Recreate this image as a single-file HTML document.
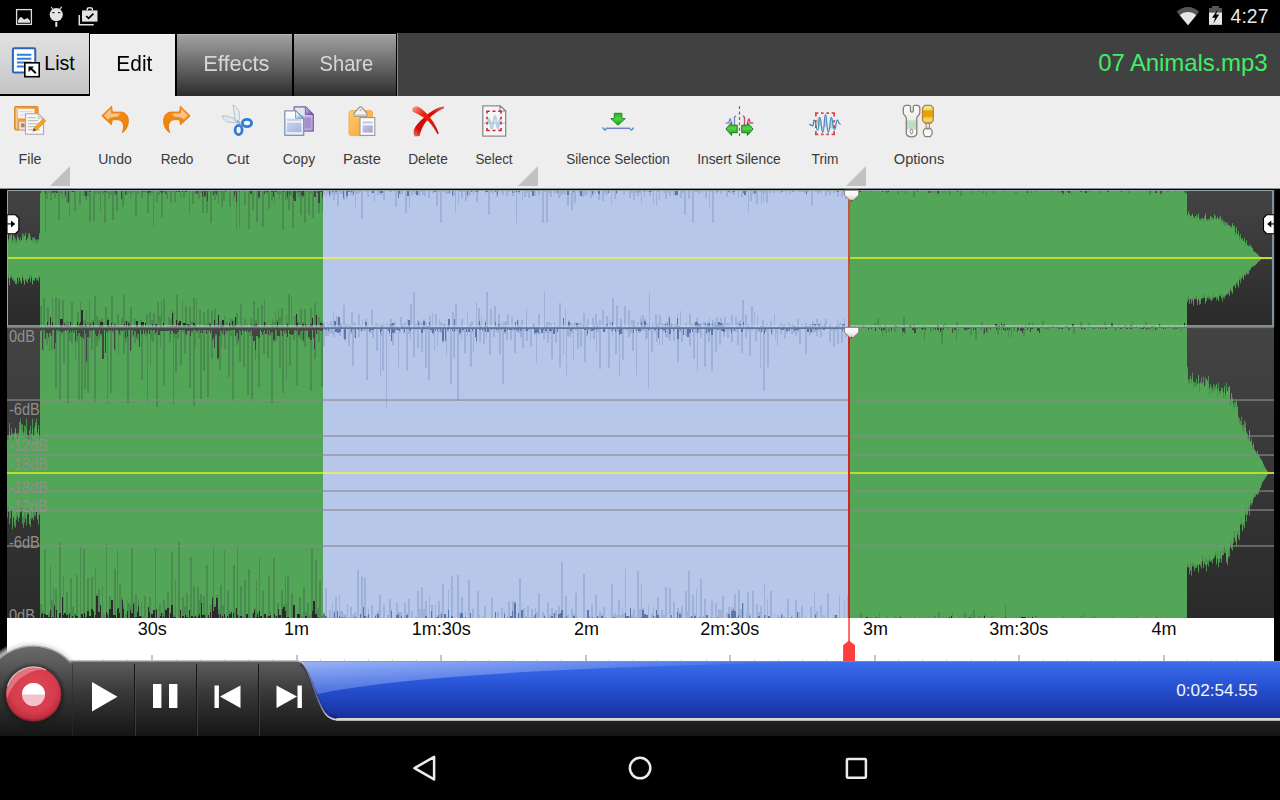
<!DOCTYPE html>
<html lang="en">
<head>
<meta charset="utf-8">
<title>07 Animals.mp3</title>
<style>
*{box-sizing:border-box;margin:0;padding:0}
html,body{width:1280px;height:800px;overflow:hidden;background:#000;font-family:"Liberation Sans",sans-serif;}
#app{position:relative;width:1280px;height:800px;background:#000;overflow:hidden}
.abs{position:absolute}
/* status bar */
#status{position:absolute;left:0;top:0;width:1280px;height:33px;background:#000;color:#fff}
#clock{position:absolute;right:11.500px;top:6px;font-size:19.300px;line-height:22px;color:#e8e8e8;letter-spacing:0.1px}
/* tab bar */
#tabbar{position:absolute;left:0;top:33px;width:1280px;height:63px;background:#414141}
#tabblack{position:absolute;left:0;top:0;width:397px;height:63px;background:#000}
.tab{position:absolute;top:1px;height:62px;font-size:21.300px;line-height:61.200px;padding-left:3px;text-align:center;color:#d6d6d6;background:linear-gradient(#a3a3a3 0%,#6e6e6e 45%,#2c2c2c 100%)}
#t-list{left:0;top:0;width:89px;height:61px;padding-left:0;background:linear-gradient(#e0e0e0,#dadada 30%,#c4c4c4);color:#000}
#t-edit{left:90px;width:85px;height:64px;background:#eeeeee;color:#000;box-shadow:inset 1px 1px 0 #fafafa}
#t-eff{left:177px;width:115px;box-shadow:inset 0 1px 0 #b4b4b4}
#t-share{left:294px;width:102px;box-shadow:inset 0 1px 0 #b4b4b4}
#fname{position:absolute;right:12.500px;top:0;height:63px;line-height:60px;font-size:24px;letter-spacing:-0.100px;color:#40ee68}
/* toolbar */
#toolbar{position:absolute;left:0;top:96px;width:1280px;height:93px;background:#eeeeee}
.tb{position:absolute;top:0;height:93px;font-size:15.5px;color:#3a3a3a;text-align:center;white-space:nowrap}
.tb span{position:absolute;left:50%;transform:translateX(-50%);top:51px;line-height:24px}
.tb svg{position:absolute;left:50%;top:8px;margin-left:-17px}
.tri{position:absolute;top:70px;width:0;height:0;border-left:20px solid transparent;border-bottom:20px solid #c1c1c1}
/* timeline */
#timeline{position:absolute;left:7px;top:618px;width:1267px;height:43px;background:#fff}
.tl{position:absolute;top:1px;font-size:18px;line-height:20px;color:#0a0a0a;transform:translateX(-50%);white-space:nowrap;letter-spacing:0}
/* nav */
#nav{position:absolute;left:0;top:736px;width:1280px;height:64px;background:#000}
.tab b{display:inline-block;font-weight:normal}
</style>
</head>
<body>
<div id="app">
<div id="status">
<svg class="abs" style="left:0;top:0" width="120" height="33" viewBox="0 0 120 33">
 <rect x="16.600" y="9.600" width="14.800" height="14.800" fill="none" stroke="#dcdcdc" stroke-width="1.300"/>
 <path d="M18 22.800V20.500C19.500 18 20.200 17 21.100 17C22.300 17 23 19.500 24.200 19.500C25.200 19.500 26 18.300 27.200 18.300C28.400 18.300 29.200 20 30 21V22.800Z" fill="#e2e2e2"/>
 <ellipse cx="56.250" cy="14.600" rx="6.600" ry="6.600" fill="#e4e4e4"/>
 <rect x="55.300" y="22" width="2" height="4.800" fill="#e4e4e4"/>
 <path d="M53 9.400L51.100 7M59.500 9.400L61.800 7" stroke="#e4e4e4" stroke-width="1.100"/>
 <path d="M52.300 12.700h2.200M58 12.700h2.200" stroke="#222" stroke-width="1.200"/>
 <path d="M79.300 15V24.700H93.700" fill="none" stroke="#e2e2e2" stroke-width="1.500"/>
 <path d="M82 10.400H97.500V21.600H82Z" fill="#e4e4e4"/>
 <path d="M87.300 10.400V8.800C87.300 7.400 92.300 7.400 92.300 8.800V10.400" fill="none" stroke="#e4e4e4" stroke-width="1.400"/>
 <path d="M86.200 16L88.600 18.400L93.400 13.600" fill="none" stroke="#000" stroke-width="1.700"/>
</svg>
<svg class="abs" style="left:1170px;top:0" width="60" height="33" viewBox="1170 0 60 33">
 <path d="M1176.700 11.800C1183 5.400 1193 5.400 1199.200 11.800L1188 25.200Z" fill="#565656"/>
 <path d="M1179.800 15.200C1184.300 10.900 1191.700 10.900 1196.200 15.200L1188 25.200Z" fill="#e6e6e6"/>
 <path d="M1209 8H1212V6.100H1219V8H1222V24.800H1209Z" fill="#565656"/>
 <path d="M1209 12.600H1222V24.800H1209Z" fill="#e6e6e6"/>
 <path d="M1217.800 9.300L1212 17.800H1215.200L1213.200 23.800L1219.200 14.600H1216.100Z" fill="#000"/>
</svg>
<div id="clock">4:27</div>
</div>
<div id="tabbar">
 <div id="tabblack"></div>
 <div class="abs" style="left:397px;top:0;width:1px;height:63px;background:#8a8a8a"></div>
 <div class="tab" id="t-list"><span style="position:absolute;left:44.300px;top:0;font-size:19.600px;line-height:61.400px;letter-spacing:0px">List</span>
  <svg class="abs" style="left:10px;top:12px" width="34" height="34" viewBox="0 0 34 34">
   <rect x="2.900" y="3.250" width="22.350" height="24.250" rx="1.200" fill="#fff" stroke="#2d63b6" stroke-width="2"/>
   <path d="M6.900 9.750H21.300M6.900 13.750H21.300M6.900 17.600H21.300M6.900 21.600H16" stroke="#2f7fe0" stroke-width="2"/>
   <rect x="14.800" y="17.800" width="14.400" height="13.900" fill="#fff" stroke="#000" stroke-width="1.600"/>
   <path d="M18.5 21.5 H24 L22.2 23.3 L26.5 27.6 L25.1 29 L20.8 24.7 L18.5 27 Z" fill="#000"/>
  </svg>
 </div>
 <div class="tab" id="t-edit"><b style="transform:scaleX(.98)">Edit</b></div>
 <div class="tab" id="t-eff"><b style="transform:scaleX(1.025)">Effects</b></div>
 <div class="tab" id="t-share"><b style="transform:scaleX(.945)">Share</b></div>
 <div id="fname">07 Animals.mp3</div>
</div>
<div id="toolbar">
<svg width="0" height="0" style="position:absolute"><defs>
 <linearGradient id="gOr" x1="0" y1="0" x2="1" y2="1"><stop offset="0" stop-color="#f6a64a"/><stop offset="1" stop-color="#ee8d1c"/></linearGradient>
 <linearGradient id="gArr" x1="0" y1="0" x2="0" y2="1"><stop offset="0" stop-color="#f59a2c"/><stop offset="0.35" stop-color="#ee8a14"/><stop offset="1" stop-color="#ea8208"/></linearGradient>
 <linearGradient id="gPurp" x1="0" y1="0" x2="1" y2="1"><stop offset="0" stop-color="#e6dcf0"/><stop offset="1" stop-color="#b29cd6"/></linearGradient>
 <linearGradient id="gDoc" x1="0" y1="0" x2="0" y2="1"><stop offset="0" stop-color="#ffffff"/><stop offset="1" stop-color="#dde9f8"/></linearGradient>
 <linearGradient id="gBand" x1="0" y1="0" x2="1" y2="1"><stop offset="0" stop-color="#cfd2e8"/><stop offset="1" stop-color="#9fb8e0"/></linearGradient>
 <linearGradient id="gClip" x1="0" y1="0" x2="1" y2="1"><stop offset="0" stop-color="#fece6c"/><stop offset="1" stop-color="#f99e36"/></linearGradient>
 <linearGradient id="gPBand" x1="0" y1="0" x2="1" y2="1"><stop offset="0" stop-color="#c2c2f0"/><stop offset="1" stop-color="#a5a5c2"/></linearGradient>
 <linearGradient id="gGrn" x1="0" y1="0" x2="0" y2="1"><stop offset="0" stop-color="#2cae28"/><stop offset="0.45" stop-color="#52d24c"/><stop offset="1" stop-color="#1f9a1c"/></linearGradient>
 <linearGradient id="gRed1" x1="0" y1="0" x2="1" y2="1"><stop offset="0" stop-color="#f8a090"/><stop offset="0.35" stop-color="#e8200c"/><stop offset="1" stop-color="#d01008"/></linearGradient>
 <linearGradient id="gRed2" x1="1" y1="0" x2="0" y2="1"><stop offset="0" stop-color="#e06060"/><stop offset="0.3" stop-color="#d40a06"/><stop offset="0.8" stop-color="#d60c08"/><stop offset="1" stop-color="#f07868"/></linearGradient>
 <linearGradient id="gWave" x1="0" y1="0" x2="1" y2="0"><stop offset="0" stop-color="#5866bc"/><stop offset="0.3" stop-color="#2f9ab4"/><stop offset="0.5" stop-color="#5b7cc4"/><stop offset="0.7" stop-color="#2f9ab4"/><stop offset="1" stop-color="#5866bc"/></linearGradient>
 <linearGradient id="gHandle" x1="0" y1="0" x2="0" y2="1"><stop offset="0" stop-color="#f07878"/><stop offset="0.07" stop-color="#f4e8b0"/><stop offset="0.2" stop-color="#e2e66a"/><stop offset="0.34" stop-color="#e6a000"/><stop offset="0.6" stop-color="#e8a204"/><stop offset="0.72" stop-color="#eed050"/><stop offset="0.86" stop-color="#e4e070"/><stop offset="1" stop-color="#e89838"/></linearGradient>
 <linearGradient id="gWr" x1="0" y1="0" x2="0" y2="1"><stop offset="0" stop-color="#fffbee"/><stop offset="0.3" stop-color="#f2f2f0"/><stop offset="0.44" stop-color="#efefef"/><stop offset="0.5" stop-color="#bfdfc4"/><stop offset="0.74" stop-color="#bfdfc4"/><stop offset="0.8" stop-color="#fffbee"/><stop offset="1" stop-color="#f4f4ea"/></linearGradient>
 <linearGradient id="gFlapB" x1="0" y1="0" x2="1" y2="1"><stop offset="0" stop-color="#ffffff"/><stop offset="0.45" stop-color="#bfe6f8"/><stop offset="1" stop-color="#3ea6e4"/></linearGradient>
 <linearGradient id="gFlapP" x1="0" y1="0" x2="1" y2="1"><stop offset="0" stop-color="#d8cdf0"/><stop offset="0.5" stop-color="#9a8ad8"/><stop offset="1" stop-color="#5444b8"/></linearGradient>
</defs></svg>
 <div class="tb" style="left:0;width:60px"><svg width="34" height="34" viewBox="0 0 34 34">
  <rect x="1.6" y="2.6" width="23.4" height="23.4" rx="1.4" fill="url(#gOr)" stroke="#d98a30" stroke-width="1.1"/>
  <rect x="2.8" y="3.8" width="1.6" height="21" fill="#fbd29c" opacity="0.8"/>
  <rect x="4.8" y="4.8" width="16.6" height="9.6" fill="#f5f4fb"/>
  <path d="M6.5 7.6h13M6.5 10.8h13" stroke="#ddd8ee" stroke-width="1.2"/>
  <rect x="6" y="17.6" width="14" height="8.2" fill="#e4e1f0" stroke="#b4b0d0" stroke-width=".7"/>
  <rect x="8.4" y="19.8" width="2.8" height="3.2" fill="#c47f22" stroke="#8f7a9a" stroke-width=".5"/>
  <path d="M12.5 9.7h12.8l5.2 5v15.6h-18z" fill="#f6f6f5" stroke="#a6a6a6" stroke-width="1.1" stroke-linejoin="round"/>
  <path d="M25.3 9.7v5h5.2z" fill="#e0e0e0" stroke="#b0b0b0" stroke-width=".6"/>
  <path d="M15 13.6h8M15 16.6h10M15 19.6h9M15 22.6h7M15 25.6h12" stroke="#c4c4c2" stroke-width="1.3"/>
  <path d="M30.4 14.6l2.4 2.4-9.6 9.4-2.4-2.4z" fill="#f6a61c" stroke="#e07c10" stroke-width=".7"/>
  <path d="M20.8 24l2.4 2.4-3.6 1.2z" fill="#7a4a20"/>
 </svg><span style="transform:translateX(-50%) scaleX(0.917)">File</span></div>
 <div class="tri" style="left:50px"></div>
 <div class="tb" style="left:85px;width:60px"><svg width="34" height="34" viewBox="0 0 34 34">
  <path d="M3.9 11.8L13.6 2.2L14.3 8.1L23.4 8.1C28 8.6 30.9 13 30.3 18.4C29.8 23 27.2 27 24.3 28.6C25.6 25 26 22 25 19.6C24 17 21.6 15.6 19 15.6L14.3 15.8L13.4 20.7Z" fill="url(#gArr)" stroke="#ee7a10" stroke-width="1" stroke-linejoin="round"/>
  <path d="M6 11.6L12.6 5.2L13.2 9.4L22 9.6L20 12.6L12.8 13.6L10 15.4Z" fill="#f7cf9c" opacity="0.85"/>
 </svg><span style="transform:translateX(-50%) scaleX(0.906)">Undo</span></div>
 <div class="tb" style="left:147px;width:60px"><svg width="34" height="34" viewBox="0 0 34 34"><g transform="translate(34,0) scale(-1,1)">
  <path d="M3.9 11.8L13.6 2.2L14.3 8.1L23.4 8.1C28 8.6 30.9 13 30.3 18.4C29.8 23 27.2 27 24.3 28.6C25.6 25 26 22 25 19.6C24 17 21.6 15.6 19 15.6L14.3 15.8L13.4 20.7Z" fill="url(#gArr)" stroke="#ee7a10" stroke-width="1" stroke-linejoin="round"/>
  <path d="M6 11.6L12.6 5.2L13.2 9.4L22 9.6L20 12.6L12.8 13.6L10 15.4Z" fill="#f7cf9c" opacity="0.85"/>
 </g></svg><span style="transform:translateX(-50%) scaleX(0.882)">Redo</span></div>
 <div class="tb" style="left:208px;width:60px"><svg width="34" height="34" viewBox="0 0 34 34">
  <path d="M1.2 11.8C3 11.4 8 12.6 12.6 14.2L17.6 18.4L16.4 19C12 18.6 7.5 18.4 5.6 17.6C3.2 16.4 1.4 13.6 1.2 11.8Z" fill="#dde8f2" stroke="#aeb6be" stroke-width=".8"/>
  <path d="M11.8 1.2C14.6 2 17.6 5.4 18.2 8.8C18.6 12 18.2 15.4 17.6 18.4L14.6 17.6C13.4 13.4 13.6 6 11.8 1.2Z" fill="#e4eef8" stroke="#aab2ba" stroke-width=".8"/>
  <path d="M16 16.5l3.5 3.5" stroke="#9aa2aa" stroke-width="1.6"/>
  <ellipse cx="26" cy="19" rx="4.6" ry="3.6" fill="#f2f2f2" stroke="#2f7cd4" stroke-width="2.8"/>
  <ellipse cx="17.6" cy="26" rx="3.5" ry="4.6" fill="#f2f2f2" stroke="#2f7cd4" stroke-width="2.8"/>
 </svg><span style="transform:translateX(-50%) scaleX(0.946)">Cut</span></div>
 <div class="tb" style="left:269px;width:60px"><svg width="34" height="34" viewBox="0 0 34 34">
  <path d="M12.2 2.8h11.2l7.9 7.6v16.7h-19.1z" fill="url(#gPurp)" stroke="#7e64aa" stroke-width="1.3" stroke-linejoin="round"/>
  <path d="M13.4 4h9.2v7.4h-9.2z" fill="#e8e6ea"/>
  <path d="M23.4 2.800v7.600h7.900z" fill="url(#gFlapP)" stroke="#7256a6" stroke-width=".8" stroke-linejoin="round"/>
  <rect x="22.5" y="13.4" width="6.6" height="10.8" fill="#a78fd0"/>
  <path d="M2.800 6.800h10.800l8.100 7.600v17h-18.900z" fill="url(#gDoc)" stroke="#8094b6" stroke-width="1.3" stroke-linejoin="round"/>
  <path d="M13.600 6.800v7.600h8.100z" fill="url(#gFlapB)" stroke="#6a86ae" stroke-width=".8" stroke-linejoin="round"/>
  <rect x="5" y="14.700" width="14.400" height="2.200" fill="#c8cfe8"/>
  <rect x="5" y="18.600" width="14.400" height="9.400" fill="url(#gBand)"/>
 </svg><span style="transform:translateX(-50%) scaleX(0.893)">Copy</span></div>
 <div class="tb" style="left:332px;width:60px"><svg width="34" height="34" viewBox="0 0 34 34">
  <rect x="4" y="6.6" width="23.6" height="25" rx="2.4" fill="url(#gClip)" stroke="#f2a040" stroke-width=".8"/>
  <path d="M15.500 2.800c.8 0 1.200.4 1.700 1.100L21 8.400q.8.300.8 1.100v2.700h-12.600v-2.700q0-.8.800-1.100L13.800 3.900c.5-.7.900-1.100 1.700-1.100z" fill="#f4f4f3" stroke="#938c84" stroke-width="1.100"/>
  <path d="M9.2 10.400h12.600v1.800h-12.600z" fill="#c9c7c2"/>
  <circle cx="15.500" cy="6.200" r="1.100" fill="#b9b9b9"/>
  <rect x="15" y="13.600" width="14.800" height="17.800" fill="#fafaff" stroke="#9a9898" stroke-width="1.100"/>
  <rect x="17.600" y="17.400" width="10.200" height="2.200" fill="#c9c8ea"/>
  <rect x="17.600" y="21.300" width="10.200" height="7.300" fill="url(#gPBand)"/>
 </svg><span style="transform:translateX(-50%) scaleX(0.954)">Paste</span></div>
 <div class="tb" style="left:398px;width:60px"><svg width="34" height="34" viewBox="0 0 34 34">
  <path d="M33 2.2L32.800 4.600C28 6.500 23.500 9.500 20 12.600C16.500 16 13.600 19.500 12 22.500C10.200 26 9 29.500 8.600 32L3.600 32.600C2.600 30.500 2.400 28 2.800 26C4.500 21.500 8 17.800 12 14.400C15 11.500 18.500 8.500 22 6.500C25.500 4.500 29.500 2.800 33 2.200Z" fill="url(#gRed2)"/>
  <path d="M2 3.600C3.500 2.400 5.500 2.200 7 2.500C11 4.500 14.500 8 17 11C19 13.400 20.600 15.500 22 17.500C24.500 21.500 26.500 25.500 27.800 29.500L26.600 30.300C24.500 26.500 22 22.500 19 19C17 16.600 14.500 14.500 12 13C8.500 10.800 4.500 9 1.500 7.500C1.200 6 1.400 4.500 2 3.600Z" fill="url(#gRed1)"/>
 </svg><span style="transform:translateX(-50%) scaleX(0.884)">Delete</span></div>
 <div class="tb" style="left:464px;width:60px"><svg width="34" height="34" viewBox="0 0 34 34">
  <path d="M5.800 1.800h17.200l5.700 5.200v25.200h-22.900z" fill="#f6f6f6" stroke="#8a8a90" stroke-width="1.300" stroke-linejoin="round"/>
  <path d="M23 1.800v5.200h5.700z" fill="#fdfdfd" stroke="#8a8a90" stroke-width="1.100" stroke-linejoin="round"/>
  <path d="M6.500 19h21.500" stroke="#c8c8ea" stroke-width="1.400"/>
  <path d="M10.800 19C11.200 19 11.200 14.800 12 14.800C13.300 14.800 13.300 24.400 14.600 24.400C16.200 24.400 16.400 12.200 18 12.200C19.600 12.200 19.600 24.400 20.900 24.400C22.200 24.400 22.200 14.800 23 14.800C23.800 14.800 23.800 19 24.200 19" fill="none" stroke="#79b6ca" stroke-width="1.700" opacity="0.8"/><path d="M10.800 19C11.200 19 11.200 14.800 12 14.800C13.300 14.800 13.300 24.400 14.600 24.400C16.200 24.400 16.400 12.200 18 12.200C19.600 12.200 19.600 24.400 20.900 24.400C22.200 24.400 22.200 14.800 23 14.800C23.800 14.800 23.800 19 24.200 19" fill="none" stroke="#d4e8f2" stroke-width="0.600"/>
  <path d="M9.250 7.300h3.500M15.500 7.300h3M21.250 7.300h3.500M9.250 26.500h3.500M15.500 26.500h3M21.250 26.500h3.500M10 6.500v3M10 12.750v2.500M10 18v2.500M10 24v3.250M24 6.500v3M24 12.750v2.500M24 18v2.500M24 24v3.250" fill="none" stroke="#d3222c" stroke-width="1.600"/>
 </svg><span style="transform:translateX(-50%) scaleX(0.863)">Select</span></div>
 <div class="tri" style="left:518px"></div>
 <div class="tb" style="left:558px;width:120px"><svg width="34" height="34" viewBox="0 0 34 34">
  <path d="M13.300 9.300h7.600v5.300h3.300L17 21.200L9.800 14.600h3.500z" fill="url(#gGrn)" stroke="#1a8c16" stroke-width="1" stroke-linejoin="round"/>
  <path d="M5.300 24.300h23.600" stroke="#767fc8" stroke-width="1.500"/>
  <path d="M1.300 23.800C3 23.800 3 26 4.300 26C5 26 5.200 24.300 5.500 24.300M28.800 24.300C29 24.300 29.300 26 30.200 26C31.400 26 31.400 24 32.800 24" fill="none" stroke="#4f8cc8" stroke-width="1.400"/>
 </svg><span style="transform:translateX(-50%) scaleX(0.870)">Silence Selection</span></div>
 <div class="tb" style="left:689px;width:100px"><svg width="34" height="34" viewBox="0 0 34 34">
  <path d="M17.500 2.200V32" stroke="#666" stroke-width="1.200" stroke-dasharray="2.900 2.500"/>
  <path d="M3.800 19h2.800c.7 0 .7-4.200 1.500-4.200c.9 0 .7 4.200 1.600 4.200M12.500 21V13.200l1.500-1.300" fill="none" stroke="#7c86cc" stroke-width="1.400"/>
  <path d="M31.200 19h-2.800c-.7 0-.7-4.200-1.500-4.200c-.9 0-.7 4.200-1.600 4.200M22.500 21V13.200l-1.500-1.300" fill="none" stroke="#d04a6c" stroke-width="1.400"/>
  <path d="M3.900 25L9.600 18.600V21.200h5.600v7.500H9.600v2.700z" fill="url(#gGrn)" stroke="#157a12" stroke-width="1" stroke-linejoin="round"/>
  <path d="M31.100 25L25.400 18.600V21.200h-5.600v7.500h5.600v2.700z" fill="url(#gGrn)" stroke="#157a12" stroke-width="1" stroke-linejoin="round"/>
 </svg><span style="transform:translateX(-50%) scaleX(0.890)">Insert Silence</span></div>
 <div class="tb" style="left:795px;width:60px"><svg width="34" height="34" viewBox="0 0 34 34">
  <path d="M8.500 21C8.500 13 10 13.300 11.500 13.300C13.300 13.300 12.800 28.300 14.800 28.300C16.600 28.300 16 10.600 17.500 10.600C19 10.600 18.500 28.300 20.300 28.300C22.200 28.300 21.600 13.300 23.300 13.300C25 13.300 25 21 26 25Z" fill="#b4c6e4" opacity="0.9"/>
  <path d="M1.300 20.300C3 20.300 3.600 21.800 4.600 21.800C5.800 21.800 5 16.200 6.300 16.200C8 16.200 7.600 26 9.800 26C11.300 26 10.400 13.300 11.800 13.300C13.400 13.300 13 28.400 14.800 28.400C16.500 28.400 16 10.600 17.500 10.600C19 10.600 18.600 28.400 20.300 28.400C22 28.400 21.800 13.300 23.300 13.300C24.800 13.300 24.600 25.600 26.400 25.600C28.200 25.600 27.800 16.200 29.300 16.200C30.700 16.200 30.200 20.500 32.800 20.500" fill="none" stroke="url(#gWave)" stroke-width="1.200"/>
  <path d="M7 9.100h3.300M13 9.100h2.600M18.400 9.100h2.600M23.700 9.100h3.300M7 30.400h3.300M13 30.400h2.600M18.400 30.400h2.600M23.700 30.400h3.300M7.850 8.250v4.300M7.850 16v2.600M7.850 21.200v2.800M7.850 27v4.200M26.150 8.250v4.300M26.150 16v2.600M26.150 21.200v2.800M26.150 27v4.200" fill="none" stroke="#d83a3a" stroke-width="1.700" opacity="0.920"/>
 </svg><span style="transform:translateX(-50%) scaleX(0.883)">Trim</span></div>
 <div class="tri" style="left:846px"></div>
 <div class="tb" style="left:889px;width:60px"><svg width="34" height="34" viewBox="0 0 34 34">
  <path d="M4 1.400H7c1 0 1.500.6 1.500 1.600V7c0 1.400 2.800 1.400 2.800 0V3c0-1 .5-1.600 1.500-1.600H15.300c1.400 0 2.500 1.500 2.500 3V9c0 2.500-3 3-3 5V29c0 2.300-2.300 3.800-5.200 3.800C6.600 32.800 4.300 31.300 4.300 29V14c0-2-3-2.500-3-5V4.400C1.300 2.900 2.500 1.400 4 1.400Z" fill="url(#gWr)" stroke="#818181" stroke-width="1.300" stroke-linejoin="round"/>
  <path d="M9.500 24.800l1.600 2.700-1.600 2.700-1.600-2.700z" fill="#fafaf2" stroke="#8a8a8a" stroke-width="1"/>
  <path d="M22.700 1.400h6.400l2.200 2.600v12.400l-2.500 2.900h-5.800l-2.500-2.900V4z" fill="url(#gHandle)" stroke="#c47a3a" stroke-width="1.200" stroke-linejoin="round"/>
  <rect x="24.200" y="19.400" width="3.200" height="5" fill="#e8efe6" stroke="#8a8a8a" stroke-width="1"/>
  <path d="M23.400 24.400h4.700l2 2.300v3l-1.700 3h-5.300l-1.700-3v-3z" fill="#fbf9ee" stroke="#818181" stroke-width="1.200" stroke-linejoin="round"/>
  <path d="M24.300 24.900h3l1 1.400h-5z" fill="#bfe0c4"/>
 </svg><span style="transform:translateX(-50%) scaleX(0.944)">Options</span></div>
</div>
<svg class="abs" style="left:0;top:188px" width="1280" height="432" viewBox="0 188 1280 432">
<defs><linearGradient id="bgT" gradientUnits="userSpaceOnUse" x1="0" y1="190" x2="0" y2="327"><stop offset="0" stop-color="#444444"/><stop offset="1" stop-color="#2a2a2a"/></linearGradient><linearGradient id="bgB" gradientUnits="userSpaceOnUse" x1="0" y1="328" x2="0" y2="618"><stop offset="0" stop-color="#444444"/><stop offset="1" stop-color="#2a2a2a"/></linearGradient></defs>
<rect x="0" y="188" width="1280" height="432" fill="#000"/><rect x="0" y="188" width="1280" height="0.600" fill="#eeeeee"/>
<rect x="7" y="190" width="1267" height="137" fill="url(#bgT)"/>
<rect x="7" y="328" width="1267" height="291" fill="url(#bgB)"/>
<rect x="323" y="190" width="526" height="429" fill="#b7c7e9"/>
<rect x="40" y="190" width="283" height="137" fill="#53a558"/>
<rect x="40" y="328" width="283" height="291" fill="#53a558"/>
<path fill="#4a8b4f" d="M40 190h1v3h-1zM43 190h2v2h-2zM45 190h1v42h-1zM46 190h2v9h-2zM48 190h2v3h-2zM50 190h2v10h-2zM54 190h2v8h-2zM58 190h2v30h-2zM60 190h2v4h-2zM62 190h1v9h-1zM63 190h1v1h-1zM64 190h2v7h-2zM66 190h2v13h-2zM69 190h1v26h-1zM70 190h2v2h-2zM74 190h2v21h-2zM76 190h1v2h-1zM79 190h2v15h-2zM83 190h2v6h-2zM85 190h2v10h-2zM87 190h2v6h-2zM89 190h2v32h-2zM93 190h2v31h-2zM95 190h1v4h-1zM96 190h2v3h-2zM98 190h2v4h-2zM100 190h1v22h-1zM101 190h1v2h-1zM102 190h2v4h-2zM104 190h2v33h-2zM106 190h2v3h-2zM108 190h2v9h-2zM110 190h2v5h-2zM112 190h2v30h-2zM114 190h2v5h-2zM116 190h2v21h-2zM118 190h2v1h-2zM122 190h2v17h-2zM126 190h2v5h-2zM128 190h2v3h-2zM130 190h1v8h-1zM131 190h2v4h-2zM133 190h2v2h-2zM135 190h2v25h-2zM137 190h2v4h-2zM141 190h2v8h-2zM143 190h2v3h-2zM147 190h2v23h-2zM149 190h2v5h-2zM151 190h2v3h-2zM153 190h1v37h-1zM156 190h2v12h-2zM158 190h2v5h-2zM161 190h2v27h-2zM165 190h1v4h-1zM166 190h2v9h-2zM168 190h2v2h-2zM170 190h2v13h-2zM172 190h2v2h-2zM174 190h2v12h-2zM180 190h1v8h-1zM183 190h2v8h-2zM185 190h2v2h-2zM189 190h1v24h-1zM192 190h2v14h-2zM194 190h2v4h-2zM196 190h2v5h-2zM198 190h2v9h-2zM200 190h2v3h-2zM202 190h2v23h-2zM204 190h2v8h-2zM206 190h2v23h-2zM208 190h2v2h-2zM210 190h2v33h-2zM212 190h2v5h-2zM214 190h2v10h-2zM216 190h2v6h-2zM218 190h1v14h-1zM219 190h2v2h-2zM221 190h2v17h-2zM223 190h2v11h-2zM229 190h2v17h-2zM233 190h1v11h-1zM234 190h2v7h-2zM236 190h1v40h-1zM239 190h1v38h-1zM242 190h2v1h-2zM244 190h2v15h-2zM248 190h2v39h-2zM252 190h2v20h-2zM256 190h2v32h-2zM258 190h2v9h-2zM260 190h2v2h-2zM262 190h2v37h-2zM266 190h2v4h-2zM268 190h2v19h-2zM271 190h2v11h-2zM273 190h1v7h-1zM274 190h1v15h-1zM277 190h2v4h-2zM279 190h1v9h-1zM280 190h2v4h-2zM282 190h2v40h-2zM284 190h1v2h-1zM285 190h2v10h-2zM287 190h1v9h-1zM288 190h2v20h-2zM290 190h2v6h-2zM292 190h2v38h-2zM296 190h2v3h-2zM298 190h2v7h-2zM300 190h2v25h-2zM302 190h2v8h-2zM304 190h2v33h-2zM306 190h2v2h-2zM308 190h2v25h-2zM310 190h2v3h-2zM312 190h2v28h-2zM318 190h2v23h-2zM322 190h1v21h-1z"/>
<path fill="url(#bgT)" d="M40 190h1v3h-1zM45 190h1v4h-1zM48 190h2v1h-2zM52 190h2v3h-2zM54 190h2v2h-2zM56 190h2v3h-2zM63 190h1v1h-1zM65 190h1v5h-1zM66 190h2v1h-2zM68 190h1v12h-1zM72 190h2v2h-2zM79 190h1v1h-1zM85 190h2v6h-2zM89 190h2v2h-2zM94 190h1v1h-1zM104 190h2v2h-2zM108 190h1v1h-1zM113 190h1v1h-1zM115 190h1v3h-1zM116 190h1v5h-1zM121 190h1v9h-1zM122 190h1v1h-1zM125 190h1v5h-1zM128 190h1v1h-1zM139 190h1v1h-1zM142 190h1v2h-1zM143 190h1v1h-1zM145 190h1v2h-1zM147 190h2v3h-2zM149 190h2v2h-2zM155 190h1v1h-1zM157 190h1v1h-1zM160 190h1v2h-1zM161 190h2v3h-2zM163 190h1v2h-1zM165 190h1v4h-1zM172 190h2v1h-2zM176 190h1v2h-1zM178 190h2v2h-2zM182 190h1v2h-1zM185 190h2v2h-2zM196 190h2v3h-2zM199 190h1v1h-1zM202 190h1v7h-1zM204 190h2v6h-2zM207 190h1v11h-1zM213 190h1v5h-1zM215 190h1v3h-1zM216 190h1v4h-1zM221 190h2v1h-2zM225 190h1v2h-1zM229 190h2v1h-2zM234 190h1v5h-1zM236 190h1v12h-1zM239 190h1v2h-1zM244 190h1v1h-1zM250 190h2v4h-2zM258 190h2v7h-2zM262 190h1v1h-1zM264 190h1v4h-1zM266 190h2v2h-2zM271 190h2v2h-2zM273 190h1v7h-1zM275 190h2v2h-2zM283 190h1v2h-1zM287 190h1v7h-1zM289 190h1v4h-1zM293 190h1v9h-1zM294 190h2v11h-2zM298 190h2v2h-2zM301 190h1v5h-1zM302 190h2v6h-2zM312 190h1v1h-1zM314 190h2v7h-2zM317 190h1v3h-1zM318 190h2v13h-2zM320 190h2v2h-2zM322 190h1v8h-1z"/>
<path fill="#4a8b4f" d="M40 327h2v-21h-2zM42 327h1v-4h-1zM43 327h2v-29h-2zM47 327h2v-20h-2zM52 327h1v-29h-1zM53 327h2v-3h-2zM55 327h2v-30h-2zM57 327h1v-2h-1zM58 327h2v-28h-2zM62 327h2v-27h-2zM64 327h2v-5h-2zM66 327h2v-6h-2zM68 327h1v-6h-1zM69 327h1v-2h-1zM71 327h2v-25h-2zM73 327h2v-2h-2zM75 327h2v-2h-2zM77 327h2v-15h-2zM79 327h1v-3h-1zM80 327h1v-25h-1zM81 327h2v-17h-2zM83 327h2v-7h-2zM85 327h1v-8h-1zM86 327h1v-17h-1zM87 327h2v-5h-2zM89 327h1v-27h-1zM90 327h2v-5h-2zM92 327h2v-7h-2zM94 327h2v-31h-2zM96 327h2v-11h-2zM98 327h2v-7h-2zM100 327h1v-7h-1zM101 327h2v-9h-2zM103 327h2v-5h-2zM105 327h2v-20h-2zM107 327h2v-9h-2zM111 327h2v-32h-2zM113 327h2v-5h-2zM117 327h2v-13h-2zM119 327h2v-3h-2zM121 327h2v-9h-2zM123 327h2v-32h-2zM125 327h2v-6h-2zM127 327h2v-6h-2zM129 327h1v-6h-1zM130 327h2v-20h-2zM134 327h2v-8h-2zM140 327h2v-7h-2zM146 327h2v-13h-2zM148 327h1v-2h-1zM149 327h2v-15h-2zM151 327h2v-7h-2zM153 327h2v-14h-2zM155 327h2v-3h-2zM157 327h2v-25h-2zM159 327h2v-11h-2zM161 327h1v-26h-1zM163 327h2v-28h-2zM168 327h2v-10h-2zM170 327h2v-8h-2zM172 327h2v-16h-2zM176 327h2v-32h-2zM179 327h1v-7h-1zM182 327h1v-26h-1zM185 327h2v-21h-2zM189 327h2v-20h-2zM191 327h2v-6h-2zM193 327h2v-29h-2zM196 327h1v-29h-1zM199 327h2v-17h-2zM203 327h2v-15h-2zM205 327h2v-3h-2zM207 327h2v-18h-2zM209 327h2v-5h-2zM211 327h2v-16h-2zM214 327h2v-18h-2zM216 327h2v-4h-2zM220 327h2v-6h-2zM224 327h1v-11h-1zM225 327h1v-3h-1zM226 327h2v-6h-2zM230 327h1v-8h-1zM231 327h2v-8h-2zM233 327h2v-6h-2zM236 327h2v-14h-2zM238 327h2v-2h-2zM240 327h2v-23h-2zM242 327h2v-2h-2zM244 327h2v-8h-2zM246 327h2v-3h-2zM250 327h2v-9h-2zM252 327h1v-4h-1zM253 327h2v-26h-2zM255 327h2v-7h-2zM257 327h2v-19h-2zM261 327h2v-22h-2zM263 327h1v-4h-1zM264 327h1v-28h-1zM265 327h2v-5h-2zM267 327h1v-2h-1zM270 327h2v-3h-2zM272 327h1v-8h-1zM273 327h2v-5h-2zM275 327h1v-15h-1zM276 327h2v-7h-2zM278 327h1v-18h-1zM279 327h2v-10h-2zM281 327h2v-19h-2zM283 327h1v-2h-1zM286 327h1v-12h-1zM287 327h1v-5h-1zM288 327h2v-33h-2zM291 327h1v-30h-1zM292 327h2v-2h-2zM294 327h2v-11h-2zM297 327h1v-7h-1zM298 327h2v-5h-2zM300 327h2v-18h-2zM302 327h2v-5h-2zM304 327h2v-18h-2zM308 327h1v-3h-1zM310 327h2v-19h-2zM314 327h2v-24h-2zM318 327h2v-10h-2zM320 327h2v-6h-2zM322 327h1v-3h-1z"/>
<path fill="url(#bgT)" d="M41 327h1v-1h-1zM45 327h1v-2h-1zM47 327h1v-5h-1zM49 327h1v-1h-1zM50 327h1v-10h-1zM52 327h1v-5h-1zM60 327h2v-8h-2zM62 327h1v-8h-1zM64 327h1v-3h-1zM66 327h2v-2h-2zM68 327h1v-1h-1zM70 327h1v-5h-1zM77 327h1v-5h-1zM79 327h1v-3h-1zM80 327h1v-5h-1zM81 327h2v-17h-2zM83 327h2v-1h-2zM85 327h1v-3h-1zM86 327h1v-2h-1zM89 327h1v-2h-1zM90 327h1v-3h-1zM93 327h1v-5h-1zM99 327h1v-2h-1zM100 327h1v-5h-1zM101 327h2v-5h-2zM107 327h2v-7h-2zM109 327h2v-1h-2zM111 327h1v-4h-1zM113 327h2v-1h-2zM115 327h1v-3h-1zM118 327h1v-1h-1zM124 327h1v-3h-1zM126 327h1v-6h-1zM128 327h1v-4h-1zM129 327h1v-3h-1zM130 327h1v-2h-1zM136 327h2v-6h-2zM141 327h1v-5h-1zM142 327h2v-5h-2zM145 327h1v-4h-1zM148 327h1v-2h-1zM152 327h1v-3h-1zM155 327h2v-3h-2zM160 327h1v-2h-1zM161 327h1v-1h-1zM163 327h1v-4h-1zM167 327h1v-1h-1zM170 327h1v-1h-1zM172 327h1v-14h-1zM174 327h2v-1h-2zM176 327h1v-7h-1zM178 327h1v-4h-1zM179 327h1v-6h-1zM180 327h1v-6h-1zM182 327h1v-1h-1zM183 327h2v-4h-2zM185 327h1v-4h-1zM187 327h2v-3h-2zM189 327h2v-2h-2zM193 327h2v-4h-2zM195 327h1v-2h-1zM209 327h2v-3h-2zM214 327h1v-7h-1zM218 327h1v-12h-1zM220 327h2v-2h-2zM222 327h2v-7h-2zM229 327h1v-4h-1zM230 327h1v-2h-1zM232 327h1v-6h-1zM233 327h2v-2h-2zM235 327h1v-10h-1zM241 327h1v-2h-1zM251 327h1v-2h-1zM253 327h2v-2h-2zM255 327h2v-3h-2zM258 327h1v-1h-1zM264 327h1v-5h-1zM272 327h1v-1h-1zM277 327h1v-5h-1zM286 327h1v-1h-1zM287 327h1v-3h-1zM296 327h1v-13h-1zM297 327h1v-4h-1zM302 327h2v-3h-2zM305 327h1v-3h-1zM306 327h1v-2h-1zM308 327h1v-1h-1zM310 327h2v-3h-2zM312 327h1v-9h-1zM316 327h1v-12h-1zM320 327h2v-4h-2zM322 327h1v-3h-1z"/>
<path fill="#4a8b4f" d="M42 328h2v23h-2zM44 328h2v11h-2zM46 328h2v17h-2zM48 328h1v11h-1zM49 328h1v23h-1zM50 328h1v7h-1zM51 328h2v22h-2zM55 328h2v61h-2zM57 328h2v4h-2zM59 328h2v72h-2zM61 328h2v6h-2zM63 328h2v35h-2zM67 328h2v75h-2zM69 328h2v13h-2zM71 328h2v17h-2zM73 328h2v5h-2zM75 328h1v31h-1zM76 328h2v15h-2zM78 328h2v72h-2zM80 328h1v10h-1zM81 328h2v73h-2zM84 328h2v61h-2zM86 328h1v35h-1zM87 328h2v65h-2zM89 328h2v10h-2zM91 328h2v22h-2zM94 328h2v74h-2zM96 328h2v18h-2zM98 328h2v12h-2zM100 328h2v8h-2zM102 328h2v31h-2zM106 328h1v5h-1zM107 328h1v76h-1zM108 328h2v4h-2zM110 328h2v65h-2zM112 328h2v5h-2zM114 328h2v23h-2zM118 328h1v27h-1zM119 328h2v8h-2zM123 328h2v26h-2zM125 328h2v14h-2zM127 328h2v75h-2zM131 328h1v21h-1zM132 328h2v9h-2zM134 328h2v15h-2zM136 328h1v11h-1zM137 328h2v12h-2zM141 328h2v52h-2zM145 328h2v8h-2zM147 328h1v74h-1zM150 328h1v37h-1zM151 328h1v12h-1zM152 328h2v14h-2zM154 328h2v7h-2zM156 328h2v79h-2zM158 328h2v7h-2zM160 328h1v19h-1zM163 328h2v57h-2zM167 328h2v3h-2zM169 328h2v14h-2zM173 328h1v77h-1zM174 328h1v10h-1zM175 328h2v45h-2zM177 328h2v11h-2zM180 328h2v37h-2zM182 328h2v4h-2zM184 328h2v25h-2zM189 328h2v60h-2zM191 328h2v5h-2zM193 328h2v78h-2zM195 328h1v18h-1zM196 328h2v5h-2zM198 328h2v10h-2zM200 328h2v71h-2zM203 328h2v43h-2zM207 328h2v69h-2zM211 328h2v31h-2zM213 328h1v12h-1zM214 328h1v20h-1zM215 328h2v8h-2zM217 328h2v32h-2zM219 328h2v42h-2zM221 328h1v19h-1zM222 328h2v7h-2zM224 328h2v21h-2zM226 328h2v5h-2zM228 328h2v49h-2zM230 328h2v8h-2zM232 328h2v73h-2zM236 328h2v17h-2zM238 328h1v14h-1zM239 328h2v34h-2zM243 328h2v39h-2zM247 328h2v67h-2zM249 328h2v8h-2zM251 328h2v73h-2zM253 328h2v13h-2zM255 328h1v33h-1zM258 328h2v59h-2zM263 328h2v26h-2zM267 328h2v30h-2zM269 328h2v8h-2zM271 328h2v75h-2zM273 328h2v14h-2zM275 328h2v13h-2zM277 328h2v8h-2zM279 328h2v39h-2zM282 328h2v65h-2zM284 328h2v6h-2zM286 328h1v53h-1zM289 328h2v38h-2zM291 328h2v7h-2zM293 328h2v12h-2zM295 328h1v4h-1zM296 328h2v57h-2zM298 328h2v9h-2zM300 328h2v12h-2zM302 328h2v14h-2zM304 328h2v19h-2zM306 328h2v3h-2zM308 328h2v11h-2zM310 328h2v63h-2zM314 328h2v31h-2zM316 328h2v6h-2zM318 328h2v14h-2zM321 328h2v59h-2z"/>
<path fill="url(#bgB)" d="M40 328h1v3h-1zM40 328h2v2h-2zM42 328h1v21h-1zM42 328h2v2h-2zM45 328h1v11h-1zM44 328h2v2h-2zM46 328h2v5h-2zM48 328h1v9h-1zM49 328h1v5h-1zM50 328h1v5h-1zM51 328h1v8h-1zM51 328h2v2h-2zM54 328h1v21h-1zM53 328h2v2h-2zM55 328h1v15h-1zM55 328h2v2h-2zM57 328h2v2h-2zM59 328h2v3h-2zM61 328h2v4h-2zM63 328h2v3h-2zM66 328h1v3h-1zM65 328h2v2h-2zM67 328h2v2h-2zM69 328h1v5h-1zM69 328h2v2h-2zM71 328h1v4h-1zM71 328h2v2h-2zM73 328h1v4h-1zM73 328h2v2h-2zM75 328h1v13h-1zM77 328h1v8h-1zM76 328h2v2h-2zM78 328h2v5h-2zM80 328h1v8h-1zM81 328h2v9h-2zM83 328h1v11h-1zM85 328h1v6h-1zM84 328h2v2h-2zM86 328h1v33h-1zM87 328h2v9h-2zM90 328h1v3h-1zM89 328h2v2h-2zM92 328h1v3h-1zM91 328h2v2h-2zM93 328h1v2h-1zM95 328h1v6h-1zM94 328h2v2h-2zM96 328h2v8h-2zM98 328h1v5h-1zM98 328h2v2h-2zM100 328h2v6h-2zM102 328h2v31h-2zM105 328h1v25h-1zM104 328h2v2h-2zM106 328h1v3h-1zM107 328h1v4h-1zM108 328h2v2h-2zM110 328h1v3h-1zM110 328h2v2h-2zM112 328h1v3h-1zM112 328h2v2h-2zM114 328h1v21h-1zM114 328h2v2h-2zM117 328h1v2h-1zM116 328h2v2h-2zM118 328h1v3h-1zM119 328h1v6h-1zM119 328h2v2h-2zM121 328h2v3h-2zM123 328h2v2h-2zM125 328h1v10h-1zM125 328h2v2h-2zM127 328h1v9h-1zM127 328h2v2h-2zM130 328h1v23h-1zM129 328h2v2h-2zM131 328h1v2h-1zM133 328h1v7h-1zM132 328h2v2h-2zM134 328h2v3h-2zM136 328h1v9h-1zM137 328h2v6h-2zM139 328h1v19h-1zM139 328h2v2h-2zM141 328h2v6h-2zM144 328h1v6h-1zM143 328h2v2h-2zM146 328h1v4h-1zM145 328h2v2h-2zM147 328h1v6h-1zM149 328h1v6h-1zM148 328h2v2h-2zM150 328h1v2h-1zM151 328h1v2h-1zM152 328h1v3h-1zM152 328h2v2h-2zM155 328h1v5h-1zM154 328h2v2h-2zM156 328h1v4h-1zM156 328h2v2h-2zM158 328h2v7h-2zM160 328h1v3h-1zM161 328h2v3h-2zM163 328h2v3h-2zM165 328h2v3h-2zM167 328h2v3h-2zM170 328h1v6h-1zM169 328h2v2h-2zM171 328h2v3h-2zM173 328h1v6h-1zM174 328h1v5h-1zM175 328h2v6h-2zM177 328h2v4h-2zM179 328h1v2h-1zM180 328h2v2h-2zM183 328h1v2h-1zM182 328h2v2h-2zM185 328h1v5h-1zM184 328h2v2h-2zM186 328h1v7h-1zM187 328h2v3h-2zM190 328h1v8h-1zM189 328h2v2h-2zM191 328h2v3h-2zM193 328h2v2h-2zM195 328h1v2h-1zM196 328h2v3h-2zM198 328h1v2h-1zM198 328h2v2h-2zM200 328h1v5h-1zM200 328h2v2h-2zM202 328h1v5h-1zM204 328h1v2h-1zM203 328h2v2h-2zM206 328h1v6h-1zM205 328h2v2h-2zM208 328h1v3h-1zM207 328h2v2h-2zM210 328h1v5h-1zM209 328h2v2h-2zM212 328h1v12h-1zM211 328h2v2h-2zM213 328h1v10h-1zM214 328h1v20h-1zM215 328h2v6h-2zM217 328h2v30h-2zM219 328h1v8h-1zM219 328h2v2h-2zM221 328h1v3h-1zM222 328h1v5h-1zM222 328h2v2h-2zM224 328h1v7h-1zM224 328h2v2h-2zM226 328h2v3h-2zM229 328h1v3h-1zM228 328h2v2h-2zM231 328h1v2h-1zM230 328h2v2h-2zM232 328h2v2h-2zM235 328h1v8h-1zM234 328h2v2h-2zM236 328h2v5h-2zM238 328h1v12h-1zM240 328h1v3h-1zM239 328h2v2h-2zM241 328h1v7h-1zM241 328h2v2h-2zM243 328h2v3h-2zM246 328h1v4h-1zM245 328h2v2h-2zM248 328h1v4h-1zM247 328h2v2h-2zM250 328h1v4h-1zM249 328h2v2h-2zM252 328h1v8h-1zM251 328h2v2h-2zM253 328h2v13h-2zM255 328h1v22h-1zM256 328h2v8h-2zM258 328h2v10h-2zM261 328h1v4h-1zM260 328h2v2h-2zM262 328h1v7h-1zM263 328h1v4h-1zM263 328h2v2h-2zM265 328h2v6h-2zM268 328h1v7h-1zM267 328h2v2h-2zM270 328h1v6h-1zM269 328h2v2h-2zM271 328h2v4h-2zM273 328h2v12h-2zM275 328h2v2h-2zM277 328h2v8h-2zM279 328h1v8h-1zM279 328h2v2h-2zM281 328h1v3h-1zM282 328h1v8h-1zM282 328h2v2h-2zM284 328h1v3h-1zM284 328h2v2h-2zM286 328h1v5h-1zM287 328h1v9h-1zM287 328h2v2h-2zM289 328h2v6h-2zM291 328h2v7h-2zM293 328h1v6h-1zM293 328h2v2h-2zM295 328h1v2h-1zM296 328h1v3h-1zM296 328h2v2h-2zM298 328h2v7h-2zM300 328h2v3h-2zM303 328h1v12h-1zM302 328h2v2h-2zM304 328h1v3h-1zM304 328h2v2h-2zM306 328h1v3h-1zM306 328h2v2h-2zM308 328h2v9h-2zM310 328h2v12h-2zM313 328h1v10h-1zM312 328h2v2h-2zM314 328h1v21h-1zM314 328h2v2h-2zM316 328h1v6h-1zM316 328h2v2h-2zM318 328h2v2h-2zM320 328h1v3h-1zM322 328h1v3h-1zM321 328h2v2h-2z"/>
<path fill="#4a8b4f" d="M40 619h2v-15h-2zM42 619h2v-8h-2zM44 619h2v-69h-2zM48 619h2v-6h-2zM50 619h1v-53h-1zM51 619h2v-19h-2zM53 619h1v-32h-1zM54 619h1v-15h-1zM55 619h2v-30h-2zM59 619h2v-76h-2zM63 619h1v-42h-1zM66 619h2v-27h-2zM68 619h2v-7h-2zM70 619h2v-41h-2zM72 619h2v-12h-2zM74 619h2v-6h-2zM76 619h2v-44h-2zM80 619h1v-73h-1zM83 619h2v-70h-2zM85 619h2v-4h-2zM87 619h2v-41h-2zM91 619h2v-42h-2zM95 619h1v-50h-1zM96 619h2v-25h-2zM98 619h2v-30h-2zM102 619h1v-33h-1zM103 619h2v-5h-2zM106 619h1v-76h-1zM107 619h2v-6h-2zM109 619h2v-23h-2zM114 619h2v-50h-2zM116 619h1v-1h-1zM117 619h1v-69h-1zM119 619h2v-34h-2zM121 619h2v-21h-2zM123 619h1v-15h-1zM125 619h2v-5h-2zM127 619h1v-18h-1zM128 619h2v-16h-2zM130 619h1v-13h-1zM131 619h2v-71h-2zM133 619h2v-17h-2zM135 619h2v-25h-2zM137 619h1v-9h-1zM138 619h1v-20h-1zM141 619h1v-17h-1zM142 619h2v-3h-2zM144 619h2v-23h-2zM146 619h2v-2h-2zM148 619h1v-12h-1zM149 619h2v-22h-2zM155 619h1v-71h-1zM157 619h2v-2h-2zM159 619h2v-15h-2zM161 619h2v-6h-2zM163 619h2v-19h-2zM165 619h2v-10h-2zM167 619h2v-26h-2zM171 619h2v-67h-2zM173 619h2v-4h-2zM175 619h1v-40h-1zM178 619h2v-77h-2zM182 619h2v-22h-2zM184 619h2v-12h-2zM186 619h2v-26h-2zM190 619h2v-62h-2zM192 619h1v-4h-1zM193 619h2v-33h-2zM195 619h2v-4h-2zM197 619h2v-32h-2zM199 619h1v-19h-1zM200 619h2v-25h-2zM203 619h2v-23h-2zM205 619h1v-5h-1zM206 619h2v-54h-2zM210 619h2v-14h-2zM212 619h1v-23h-1zM213 619h1v-74h-1zM214 619h2v-14h-2zM216 619h2v-24h-2zM218 619h2v-10h-2zM220 619h2v-34h-2zM222 619h2v-14h-2zM224 619h1v-69h-1zM227 619h2v-28h-2zM229 619h2v-8h-2zM233 619h2v-54h-2zM235 619h2v-11h-2zM237 619h1v-74h-1zM238 619h2v-4h-2zM240 619h2v-33h-2zM242 619h2v-3h-2zM244 619h2v-39h-2zM248 619h2v-50h-2zM252 619h2v-6h-2zM254 619h2v-11h-2zM256 619h1v-39h-1zM257 619h2v-7h-2zM259 619h1v-62h-1zM262 619h2v-28h-2zM266 619h2v-3h-2zM268 619h2v-43h-2zM270 619h1v-7h-1zM271 619h2v-1h-2zM273 619h2v-61h-2zM275 619h2v-3h-2zM277 619h2v-16h-2zM281 619h2v-29h-2zM283 619h2v-14h-2zM285 619h1v-42h-1zM286 619h1v-15h-1zM287 619h2v-43h-2zM291 619h2v-26h-2zM293 619h2v-14h-2zM299 619h2v-22h-2zM301 619h2v-3h-2zM303 619h2v-32h-2zM305 619h2v-7h-2zM307 619h2v-16h-2zM309 619h2v-4h-2zM311 619h2v-70h-2zM313 619h2v-18h-2zM315 619h2v-59h-2zM317 619h2v-11h-2zM319 619h2v-38h-2zM321 619h2v-3h-2z"/>
<path fill="url(#bgB)" d="M41 619h1v-5h-1zM40 619h2v-1h-2zM42 619h1v-6h-1zM42 619h2v-1h-2zM44 619h2v-5h-2zM46 619h2v-4h-2zM48 619h2v-2h-2zM50 619h1v-9h-1zM52 619h1v-2h-1zM51 619h2v-1h-2zM53 619h1v-1h-1zM54 619h1v-13h-1zM56 619h1v-9h-1zM55 619h2v-1h-2zM58 619h1v-1h-1zM57 619h2v-1h-2zM59 619h2v-6h-2zM62 619h1v-22h-1zM61 619h2v-1h-2zM63 619h1v-4h-1zM64 619h2v-6h-2zM66 619h2v-4h-2zM69 619h1v-5h-1zM68 619h2v-1h-2zM70 619h1v-1h-1zM70 619h2v-1h-2zM72 619h1v-3h-1zM72 619h2v-1h-2zM75 619h1v-4h-1zM74 619h2v-1h-2zM76 619h2v-3h-2zM78 619h1v-1h-1zM78 619h2v-1h-2zM80 619h1v-1h-1zM81 619h2v-5h-2zM84 619h1v-6h-1zM83 619h2v-1h-2zM86 619h1v-2h-1zM85 619h2v-1h-2zM87 619h2v-8h-2zM89 619h2v-3h-2zM91 619h2v-10h-2zM93 619h1v-8h-1zM93 619h2v-1h-2zM95 619h1v-4h-1zM96 619h2v-23h-2zM98 619h2v-7h-2zM100 619h1v-14h-1zM100 619h2v-1h-2zM102 619h1v-1h-1zM103 619h2v-1h-2zM105 619h1v-1h-1zM106 619h1v-7h-1zM107 619h1v-4h-1zM107 619h2v-1h-2zM109 619h2v-10h-2zM111 619h2v-19h-2zM113 619h1v-4h-1zM114 619h2v-4h-2zM116 619h1v-1h-1zM117 619h1v-10h-1zM118 619h1v-11h-1zM119 619h1v-6h-1zM119 619h2v-1h-2zM122 619h1v-19h-1zM121 619h2v-1h-2zM123 619h1v-10h-1zM124 619h1v-1h-1zM125 619h2v-1h-2zM127 619h1v-8h-1zM128 619h2v-1h-2zM130 619h1v-9h-1zM131 619h2v-6h-2zM133 619h1v-15h-1zM133 619h2v-1h-2zM135 619h2v-2h-2zM137 619h1v-7h-1zM138 619h1v-13h-1zM139 619h2v-3h-2zM141 619h1v-2h-1zM142 619h2v-1h-2zM145 619h1v-1h-1zM144 619h2v-1h-2zM146 619h2v-1h-2zM148 619h1v-12h-1zM149 619h1v-7h-1zM149 619h2v-1h-2zM151 619h2v-5h-2zM153 619h2v-9h-2zM155 619h1v-1h-1zM156 619h1v-10h-1zM158 619h1v-1h-1zM157 619h2v-1h-2zM160 619h1v-3h-1zM159 619h2v-1h-2zM161 619h1v-6h-1zM161 619h2v-1h-2zM163 619h1v-3h-1zM163 619h2v-1h-2zM165 619h2v-9h-2zM167 619h2v-11h-2zM170 619h1v-6h-1zM169 619h2v-1h-2zM171 619h2v-14h-2zM173 619h2v-2h-2zM175 619h1v-2h-1zM177 619h1v-1h-1zM176 619h2v-1h-2zM178 619h2v-1h-2zM180 619h1v-9h-1zM180 619h2v-1h-2zM182 619h2v-3h-2zM185 619h1v-4h-1zM184 619h2v-1h-2zM186 619h2v-2h-2zM189 619h1v-9h-1zM188 619h2v-1h-2zM191 619h1v-3h-1zM190 619h2v-1h-2zM192 619h1v-3h-1zM194 619h1v-2h-1zM193 619h2v-1h-2zM195 619h1v-3h-1zM195 619h2v-1h-2zM198 619h1v-3h-1zM197 619h2v-1h-2zM199 619h1v-5h-1zM201 619h1v-16h-1zM200 619h2v-1h-2zM202 619h1v-4h-1zM203 619h2v-4h-2zM205 619h1v-1h-1zM206 619h1v-1h-1zM206 619h2v-1h-2zM208 619h1v-4h-1zM208 619h2v-1h-2zM210 619h1v-7h-1zM210 619h2v-1h-2zM212 619h1v-21h-1zM213 619h1v-8h-1zM214 619h2v-12h-2zM216 619h2v-21h-2zM218 619h1v-5h-1zM218 619h2v-1h-2zM220 619h1v-5h-1zM220 619h2v-1h-2zM222 619h1v-3h-1zM222 619h2v-1h-2zM224 619h1v-5h-1zM225 619h1v-1h-1zM225 619h2v-1h-2zM227 619h1v-3h-1zM227 619h2v-1h-2zM229 619h2v-5h-2zM231 619h1v-7h-1zM231 619h2v-1h-2zM233 619h1v-6h-1zM233 619h2v-1h-2zM236 619h1v-11h-1zM235 619h2v-1h-2zM237 619h1v-4h-1zM238 619h2v-1h-2zM240 619h2v-3h-2zM242 619h1v-1h-1zM242 619h2v-1h-2zM245 619h1v-1h-1zM244 619h2v-1h-2zM246 619h2v-5h-2zM248 619h1v-1h-1zM248 619h2v-1h-2zM251 619h1v-1h-1zM250 619h2v-1h-2zM253 619h1v-6h-1zM252 619h2v-1h-2zM254 619h1v-9h-1zM254 619h2v-1h-2zM256 619h1v-2h-1zM257 619h1v-5h-1zM257 619h2v-1h-2zM259 619h1v-8h-1zM260 619h2v-3h-2zM263 619h1v-1h-1zM262 619h2v-1h-2zM264 619h2v-5h-2zM266 619h2v-1h-2zM268 619h2v-3h-2zM270 619h1v-4h-1zM272 619h1v-1h-1zM271 619h2v-1h-2zM274 619h1v-5h-1zM273 619h2v-1h-2zM276 619h1v-3h-1zM275 619h2v-1h-2zM278 619h1v-10h-1zM277 619h2v-1h-2zM279 619h2v-4h-2zM282 619h1v-10h-1zM281 619h2v-1h-2zM283 619h2v-12h-2zM285 619h1v-8h-1zM286 619h1v-1h-1zM287 619h2v-2h-2zM289 619h1v-1h-1zM289 619h2v-1h-2zM291 619h2v-1h-2zM293 619h2v-14h-2zM295 619h2v-1h-2zM297 619h2v-5h-2zM299 619h1v-5h-1zM299 619h2v-1h-2zM302 619h1v-1h-1zM301 619h2v-1h-2zM304 619h1v-1h-1zM303 619h2v-1h-2zM305 619h2v-3h-2zM307 619h2v-1h-2zM309 619h2v-1h-2zM312 619h1v-8h-1zM311 619h2v-1h-2zM313 619h2v-18h-2zM315 619h2v-5h-2zM317 619h1v-2h-1zM317 619h2v-1h-2zM320 619h1v-1h-1zM319 619h2v-1h-2zM322 619h1v-1h-1zM321 619h2v-1h-2z"/>
<rect x="323" y="190" width="526" height="137" fill="#b7c7e9"/>
<rect x="323" y="328" width="526" height="291" fill="#b7c7e9"/>
<path fill="#9fb1d8" d="M323 190h2v5h-2zM326 190h1v7h-1zM327 190h2v3h-2zM329 190h2v7h-2zM331 190h2v4h-2zM333 190h2v10h-2zM335 190h2v4h-2zM337 190h2v16h-2zM339 190h1v2h-1zM340 190h2v4h-2zM342 190h1v4h-1zM343 190h2v10h-2zM346 190h2v9h-2zM350 190h1v6h-1zM351 190h1v4h-1zM352 190h2v6h-2zM355 190h1v17h-1zM356 190h2v4h-2zM358 190h2v3h-2zM360 190h1v2h-1zM361 190h2v29h-2zM365 190h2v2h-2zM367 190h2v7h-2zM370 190h1v2h-1zM371 190h1v4h-1zM374 190h1v12h-1zM377 190h2v5h-2zM379 190h1v3h-1zM380 190h2v5h-2zM383 190h2v10h-2zM395 190h2v17h-2zM399 190h2v5h-2zM401 190h2v4h-2zM405 190h2v23h-2zM409 190h1v17h-1zM410 190h1v2h-1zM411 190h2v5h-2zM413 190h1v2h-1zM414 190h2v4h-2zM418 190h2v6h-2zM420 190h2v2h-2zM422 190h2v5h-2zM424 190h2v6h-2zM428 190h2v8h-2zM432 190h2v3h-2zM436 190h2v16h-2zM438 190h2v2h-2zM440 190h2v33h-2zM442 190h2v2h-2zM445 190h2v4h-2zM447 190h2v4h-2zM450 190h2v1h-2zM452 190h1v7h-1zM453 190h2v6h-2zM455 190h1v22h-1zM458 190h1v14h-1zM459 190h2v2h-2zM461 190h2v8h-2zM463 190h2v2h-2zM465 190h2v11h-2zM467 190h2v7h-2zM469 190h2v5h-2zM471 190h2v2h-2zM473 190h1v5h-1zM474 190h2v2h-2zM476 190h2v12h-2zM478 190h1v3h-1zM485 190h1v4h-1zM488 190h2v25h-2zM490 190h2v2h-2zM492 190h2v3h-2zM496 190h2v7h-2zM501 190h1v3h-1zM502 190h2v5h-2zM506 190h2v6h-2zM508 190h2v2h-2zM512 190h2v6h-2zM514 190h2v3h-2zM516 190h1v33h-1zM518 190h2v4h-2zM522 190h1v10h-1zM524 190h2v7h-2zM526 190h2v3h-2zM528 190h2v8h-2zM530 190h2v2h-2zM534 190h1v5h-1zM535 190h1v6h-1zM538 190h2v5h-2zM542 190h2v33h-2zM544 190h2v2h-2zM546 190h2v33h-2zM548 190h2v3h-2zM550 190h2v7h-2zM554 190h2v4h-2zM558 190h2v8h-2zM560 190h2v6h-2zM562 190h2v4h-2zM564 190h2v4h-2zM567 190h2v16h-2zM571 190h2v20h-2zM573 190h1v4h-1zM574 190h2v13h-2zM578 190h2v3h-2zM582 190h2v7h-2zM584 190h2v6h-2zM586 190h2v5h-2zM590 190h2v8h-2zM592 190h2v6h-2zM594 190h2v3h-2zM598 190h2v10h-2zM602 190h2v11h-2zM604 190h2v4h-2zM606 190h2v5h-2zM611 190h1v14h-1zM612 190h2v1h-2zM614 190h2v9h-2zM616 190h1v5h-1zM617 190h1v3h-1zM621 190h2v1h-2zM623 190h2v5h-2zM629 190h2v8h-2zM631 190h2v3h-2zM633 190h2v10h-2zM635 190h2v3h-2zM637 190h2v6h-2zM639 190h2v3h-2zM641 190h1v14h-1zM644 190h1v7h-1zM647 190h2v2h-2zM649 190h2v6h-2zM651 190h2v2h-2zM653 190h1v15h-1zM656 190h1v16h-1zM657 190h2v2h-2zM659 190h1v10h-1zM660 190h2v1h-2zM663 190h2v3h-2zM665 190h2v9h-2zM667 190h2v3h-2zM669 190h2v6h-2zM673 190h2v5h-2zM675 190h2v6h-2zM677 190h1v5h-1zM680 190h2v8h-2zM682 190h2v3h-2zM684 190h2v25h-2zM688 190h2v9h-2zM692 190h2v33h-2zM694 190h2v2h-2zM696 190h2v2h-2zM698 190h2v4h-2zM701 190h2v3h-2zM705 190h2v8h-2zM709 190h1v17h-1zM710 190h2v2h-2zM712 190h2v33h-2zM716 190h2v3h-2zM720 190h2v4h-2zM726 190h2v7h-2zM729 190h2v3h-2zM731 190h2v3h-2zM733 190h2v5h-2zM738 190h1v7h-1zM741 190h2v7h-2zM744 190h2v5h-2zM746 190h2v2h-2zM748 190h1v23h-1zM750 190h2v11h-2zM752 190h2v4h-2zM754 190h2v5h-2zM756 190h2v14h-2zM758 190h1v1h-1zM759 190h2v2h-2zM761 190h1v14h-1zM762 190h1v4h-1zM763 190h1v12h-1zM764 190h2v3h-2zM766 190h2v13h-2zM769 190h2v3h-2zM773 190h2v3h-2zM777 190h1v2h-1zM780 190h2v3h-2zM786 190h1v5h-1zM789 190h2v4h-2zM792 190h2v2h-2zM794 190h2v1h-2zM798 190h1v3h-1zM799 190h2v2h-2zM801 190h2v2h-2zM803 190h1v2h-1zM804 190h2v3h-2zM806 190h1v6h-1zM807 190h2v2h-2zM811 190h2v16h-2zM815 190h2v2h-2zM817 190h2v4h-2zM819 190h1v2h-1zM820 190h2v3h-2zM825 190h2v6h-2zM827 190h2v2h-2zM829 190h2v5h-2zM831 190h2v1h-2zM833 190h2v3h-2zM835 190h2v2h-2zM837 190h2v7h-2zM841 190h2v7h-2zM843 190h2v2h-2zM845 190h2v9h-2zM847 190h2v2h-2z"/>
<path fill="#5b76ab" d="M329 190h1v5h-1zM332 190h1v2h-1zM335 190h2v2h-2zM343 190h1v8h-1zM346 190h2v6h-2zM348 190h2v2h-2zM351 190h1v2h-1zM353 190h1v4h-1zM372 190h2v3h-2zM380 190h2v3h-2zM382 190h1v3h-1zM390 190h1v2h-1zM398 190h1v8h-1zM399 190h1v3h-1zM407 190h2v6h-2zM416 190h2v5h-2zM434 190h2v2h-2zM449 190h1v3h-1zM452 190h1v5h-1zM467 190h1v5h-1zM471 190h1v2h-1zM476 190h2v2h-2zM484 190h1v1h-1zM485 190h1v2h-1zM486 190h2v2h-2zM490 190h2v1h-2zM495 190h1v2h-1zM497 190h1v5h-1zM512 190h1v3h-1zM516 190h1v2h-1zM518 190h2v2h-2zM521 190h1v1h-1zM522 190h1v1h-1zM524 190h2v1h-2zM532 190h2v6h-2zM539 190h1v1h-1zM557 190h1v3h-1zM567 190h2v5h-2zM573 190h1v2h-1zM580 190h2v6h-2zM592 190h1v4h-1zM598 190h2v4h-2zM608 190h1v3h-1zM616 190h1v3h-1zM638 190h1v2h-1zM639 190h1v1h-1zM644 190h1v2h-1zM649 190h2v2h-2zM675 190h2v5h-2zM677 190h1v5h-1zM683 190h1v1h-1zM717 190h1v2h-1zM728 190h1v2h-1zM733 190h2v2h-2zM743 190h1v3h-1zM744 190h2v5h-2zM754 190h2v3h-2zM782 190h1v2h-1zM791 190h1v1h-1zM793 190h1v2h-1zM796 190h1v1h-1zM806 190h1v4h-1zM812 190h1v1h-1zM822 190h1v1h-1zM837 190h2v2h-2z"/>
<path fill="#9fb1d8" d="M323 327h2v-5h-2zM327 327h1v-5h-1zM328 327h2v-3h-2zM330 327h2v-6h-2zM332 327h1v-3h-1zM333 327h1v-14h-1zM336 327h2v-11h-2zM338 327h2v-10h-2zM340 327h2v-4h-2zM343 327h2v-22h-2zM345 327h2v-3h-2zM347 327h2v-3h-2zM349 327h2v-2h-2zM351 327h2v-15h-2zM353 327h2v-4h-2zM355 327h1v-4h-1zM358 327h2v-13h-2zM360 327h2v-2h-2zM362 327h1v-7h-1zM365 327h2v-8h-2zM367 327h2v-3h-2zM371 327h2v-17h-2zM375 327h2v-4h-2zM377 327h2v-3h-2zM379 327h2v-2h-2zM383 327h1v-4h-1zM384 327h2v-2h-2zM386 327h2v-4h-2zM390 327h2v-8h-2zM392 327h2v-4h-2zM394 327h2v-5h-2zM396 327h2v-1h-2zM400 327h2v-10h-2zM402 327h2v-3h-2zM404 327h2v-4h-2zM407 327h1v-8h-1zM410 327h2v-23h-2zM413 327h2v-35h-2zM415 327h2v-3h-2zM417 327h2v-7h-2zM419 327h2v-5h-2zM421 327h2v-4h-2zM423 327h2v-8h-2zM425 327h2v-5h-2zM429 327h2v-11h-2zM431 327h1v-2h-1zM432 327h1v-14h-1zM435 327h2v-13h-2zM439 327h1v-8h-1zM440 327h2v-5h-2zM442 327h2v-3h-2zM447 327h1v-3h-1zM452 327h2v-15h-2zM454 327h1v-8h-1zM455 327h2v-23h-2zM457 327h2v-2h-2zM459 327h2v-2h-2zM461 327h2v-8h-2zM467 327h1v-14h-1zM468 327h2v-2h-2zM470 327h1v-4h-1zM471 327h2v-6h-2zM475 327h1v-2h-1zM476 327h1v-25h-1zM477 327h1v-4h-1zM478 327h2v-19h-2zM480 327h1v-3h-1zM481 327h1v-10h-1zM484 327h1v-3h-1zM485 327h1v-7h-1zM486 327h2v-35h-2zM490 327h2v-18h-2zM494 327h2v-21h-2zM496 327h2v-2h-2zM498 327h2v-13h-2zM500 327h1v-2h-1zM501 327h1v-4h-1zM502 327h1v-2h-1zM503 327h2v-5h-2zM505 327h2v-6h-2zM507 327h2v-13h-2zM511 327h2v-10h-2zM517 327h2v-7h-2zM519 327h2v-1h-2zM521 327h2v-7h-2zM526 327h1v-18h-1zM533 327h2v-4h-2zM536 327h2v-2h-2zM538 327h2v-13h-2zM544 327h1v-35h-1zM546 327h2v-5h-2zM548 327h2v-5h-2zM550 327h2v-4h-2zM554 327h1v-5h-1zM555 327h2v-2h-2zM557 327h2v-2h-2zM559 327h2v-24h-2zM565 327h1v-18h-1zM566 327h2v-2h-2zM568 327h2v-7h-2zM570 327h2v-4h-2zM572 327h2v-3h-2zM574 327h2v-5h-2zM576 327h2v-4h-2zM578 327h2v-4h-2zM580 327h1v-5h-1zM581 327h2v-3h-2zM583 327h2v-14h-2zM585 327h1v-2h-1zM587 327h2v-8h-2zM592 327h2v-9h-2zM595 327h2v-13h-2zM597 327h1v-4h-1zM599 327h2v-7h-2zM601 327h1v-1h-1zM602 327h2v-17h-2zM604 327h2v-2h-2zM606 327h2v-11h-2zM609 327h1v-8h-1zM610 327h2v-5h-2zM612 327h2v-29h-2zM616 327h2v-22h-2zM620 327h2v-8h-2zM624 327h2v-21h-2zM628 327h2v-17h-2zM630 327h1v-2h-1zM631 327h2v-7h-2zM633 327h2v-7h-2zM637 327h2v-5h-2zM640 327h1v-10h-1zM641 327h1v-7h-1zM642 327h2v-12h-2zM644 327h2v-8h-2zM646 327h2v-4h-2zM648 327h1v-3h-1zM649 327h1v-35h-1zM652 327h1v-4h-1zM653 327h2v-2h-2zM655 327h2v-13h-2zM657 327h2v-4h-2zM659 327h2v-12h-2zM661 327h2v-4h-2zM663 327h2v-3h-2zM665 327h2v-5h-2zM667 327h1v-5h-1zM668 327h2v-11h-2zM670 327h2v-4h-2zM672 327h2v-3h-2zM674 327h1v-2h-1zM675 327h2v-3h-2zM677 327h1v-13h-1zM680 327h1v-16h-1zM685 327h2v-4h-2zM689 327h2v-13h-2zM691 327h2v-3h-2zM693 327h2v-4h-2zM695 327h1v-5h-1zM696 327h2v-9h-2zM698 327h2v-3h-2zM700 327h2v-4h-2zM703 327h2v-5h-2zM707 327h2v-5h-2zM709 327h1v-9h-1zM710 327h2v-3h-2zM712 327h2v-7h-2zM714 327h2v-5h-2zM716 327h2v-10h-2zM720 327h2v-9h-2zM722 327h2v-4h-2zM724 327h2v-10h-2zM726 327h2v-4h-2zM728 327h2v-4h-2zM731 327h2v-12h-2zM735 327h2v-10h-2zM737 327h2v-5h-2zM739 327h2v-7h-2zM741 327h1v-3h-1zM742 327h2v-27h-2zM744 327h1v-3h-1zM745 327h2v-12h-2zM747 327h2v-3h-2zM751 327h2v-21h-2zM754 327h1v-15h-1zM757 327h1v-12h-1zM762 327h2v-7h-2zM764 327h2v-1h-2zM766 327h2v-3h-2zM768 327h2v-2h-2zM770 327h2v-6h-2zM774 327h1v-13h-1zM777 327h1v-2h-1zM778 327h2v-2h-2zM780 327h1v-5h-1zM781 327h2v-3h-2zM783 327h1v-3h-1zM784 327h2v-3h-2zM788 327h2v-4h-2zM790 327h2v-2h-2zM792 327h2v-3h-2zM797 327h2v-8h-2zM801 327h2v-3h-2zM805 327h2v-4h-2zM807 327h2v-2h-2zM809 327h2v-3h-2zM811 327h1v-2h-1zM812 327h2v-6h-2zM816 327h2v-8h-2zM820 327h1v-6h-1zM821 327h2v-2h-2zM823 327h1v-2h-1zM824 327h1v-4h-1zM825 327h2v-8h-2zM829 327h2v-3h-2zM831 327h2v-2h-2zM837 327h1v-8h-1zM838 327h2v-3h-2zM840 327h1v-5h-1zM841 327h1v-2h-1zM844 327h1v-9h-1zM847 327h2v-2h-2z"/>
<path fill="#5b76ab" d="M323 327h2v-2h-2zM332 327h1v-1h-1zM334 327h2v-6h-2zM338 327h2v-10h-2zM340 327h2v-2h-2zM342 327h1v-1h-1zM345 327h2v-1h-2zM349 327h2v-1h-2zM365 327h2v-5h-2zM374 327h1v-1h-1zM381 327h2v-2h-2zM389 327h1v-2h-1zM390 327h2v-3h-2zM392 327h2v-4h-2zM401 327h1v-2h-1zM402 327h2v-1h-2zM406 327h1v-1h-1zM408 327h2v-7h-2zM414 327h1v-2h-1zM418 327h1v-5h-1zM423 327h2v-6h-2zM427 327h2v-1h-2zM429 327h1v-5h-1zM434 327h1v-1h-1zM444 327h1v-3h-1zM448 327h2v-8h-2zM454 327h1v-8h-1zM470 327h1v-2h-1zM479 327h1v-6h-1zM480 327h1v-1h-1zM484 327h1v-1h-1zM485 327h1v-5h-1zM486 327h2v-1h-2zM495 327h1v-5h-1zM498 327h2v-3h-2zM502 327h1v-1h-1zM505 327h1v-1h-1zM515 327h1v-5h-1zM517 327h1v-7h-1zM519 327h2v-1h-2zM526 327h1v-2h-1zM532 327h1v-1h-1zM533 327h2v-2h-2zM544 327h1v-2h-1zM546 327h2v-1h-2zM559 327h2v-1h-2zM563 327h1v-9h-1zM568 327h2v-5h-2zM576 327h2v-4h-2zM579 327h1v-1h-1zM583 327h1v-2h-1zM586 327h1v-2h-1zM594 327h1v-2h-1zM597 327h1v-2h-1zM598 327h1v-1h-1zM606 327h2v-3h-2zM612 327h1v-5h-1zM616 327h1v-2h-1zM618 327h2v-1h-2zM620 327h2v-2h-2zM629 327h1v-1h-1zM633 327h1v-2h-1zM635 327h1v-2h-1zM641 327h1v-5h-1zM642 327h2v-1h-2zM644 327h2v-6h-2zM649 327h1v-2h-1zM652 327h1v-2h-1zM656 327h1v-2h-1zM658 327h1v-2h-1zM662 327h1v-1h-1zM665 327h1v-3h-1zM667 327h1v-3h-1zM669 327h1v-9h-1zM670 327h2v-2h-2zM675 327h2v-1h-2zM677 327h1v-9h-1zM678 327h2v-1h-2zM695 327h1v-5h-1zM696 327h2v-5h-2zM698 327h2v-3h-2zM700 327h1v-2h-1zM705 327h1v-4h-1zM707 327h2v-3h-2zM709 327h1v-4h-1zM712 327h1v-3h-1zM714 327h2v-2h-2zM716 327h2v-2h-2zM718 327h2v-5h-2zM720 327h2v-4h-2zM722 327h2v-2h-2zM737 327h1v-1h-1zM739 327h2v-3h-2zM743 327h1v-5h-1zM747 327h2v-1h-2zM751 327h2v-1h-2zM760 327h2v-1h-2zM763 327h1v-2h-1zM771 327h1v-1h-1zM783 327h1v-1h-1zM784 327h1v-1h-1zM792 327h2v-1h-2zM794 327h2v-1h-2zM797 327h1v-1h-1zM804 327h1v-1h-1zM805 327h2v-1h-2zM809 327h2v-1h-2zM812 327h1v-3h-1zM814 327h2v-3h-2zM818 327h2v-3h-2zM822 327h1v-1h-1zM824 327h1v-2h-1zM825 327h2v-1h-2zM829 327h2v-1h-2zM835 327h2v-1h-2zM837 327h1v-1h-1zM838 327h2v-1h-2zM842 327h2v-3h-2zM844 327h1v-3h-1z"/>
<path fill="#9fb1d8" d="M323 328h2v18h-2zM325 328h2v8h-2zM327 328h2v8h-2zM329 328h2v5h-2zM331 328h2v6h-2zM333 328h2v9h-2zM339 328h2v8h-2zM343 328h1v10h-1zM344 328h2v13h-2zM348 328h2v18h-2zM350 328h2v6h-2zM352 328h2v38h-2zM354 328h2v10h-2zM358 328h2v9h-2zM360 328h1v2h-1zM361 328h1v5h-1zM362 328h2v3h-2zM364 328h2v3h-2zM366 328h2v52h-2zM370 328h2v5h-2zM372 328h2v10h-2zM376 328h2v23h-2zM380 328h1v48h-1zM381 328h1v8h-1zM382 328h2v43h-2zM386 328h1v80h-1zM387 328h2v3h-2zM389 328h1v8h-1zM392 328h2v17h-2zM394 328h2v6h-2zM398 328h1v39h-1zM399 328h2v5h-2zM401 328h2v2h-2zM403 328h2v6h-2zM406 328h2v43h-2zM408 328h2v6h-2zM410 328h1v11h-1zM413 328h2v29h-2zM415 328h2v2h-2zM417 328h2v20h-2zM421 328h2v24h-2zM423 328h2v3h-2zM425 328h2v40h-2zM427 328h1v3h-1zM428 328h2v52h-2zM430 328h2v4h-2zM432 328h2v7h-2zM434 328h1v23h-1zM437 328h1v18h-1zM438 328h2v4h-2zM440 328h2v5h-2zM442 328h2v15h-2zM446 328h1v28h-1zM447 328h2v4h-2zM450 328h2v56h-2zM453 328h2v30h-2zM455 328h2v3h-2zM457 328h2v73h-2zM459 328h2v7h-2zM461 328h1v11h-1zM462 328h2v4h-2zM464 328h2v25h-2zM467 328h1v9h-1zM470 328h2v39h-2zM472 328h1v5h-1zM473 328h1v24h-1zM476 328h1v15h-1zM479 328h2v14h-2zM483 328h2v16h-2zM486 328h1v10h-1zM489 328h2v27h-2zM493 328h2v9h-2zM495 328h2v3h-2zM497 328h2v5h-2zM499 328h2v26h-2zM502 328h2v56h-2zM504 328h2v6h-2zM506 328h2v12h-2zM508 328h2v2h-2zM510 328h2v12h-2zM512 328h2v3h-2zM514 328h2v25h-2zM516 328h2v4h-2zM518 328h2v5h-2zM520 328h1v10h-1zM521 328h1v9h-1zM522 328h2v20h-2zM524 328h2v3h-2zM526 328h2v13h-2zM528 328h2v3h-2zM530 328h2v19h-2zM534 328h2v7h-2zM536 328h1v35h-1zM537 328h1v6h-1zM538 328h2v7h-2zM540 328h1v2h-1zM541 328h2v5h-2zM543 328h2v11h-2zM545 328h2v5h-2zM547 328h2v15h-2zM549 328h2v5h-2zM551 328h2v31h-2zM555 328h2v15h-2zM559 328h2v39h-2zM563 328h1v26h-1zM566 328h1v47h-1zM567 328h2v8h-2zM569 328h2v9h-2zM571 328h2v5h-2zM573 328h1v32h-1zM575 328h2v3h-2zM577 328h2v21h-2zM580 328h2v19h-2zM584 328h2v34h-2zM586 328h2v8h-2zM588 328h2v3h-2zM590 328h1v12h-1zM593 328h2v11h-2zM596 328h1v23h-1zM597 328h2v4h-2zM599 328h2v41h-2zM605 328h1v3h-1zM608 328h2v40h-2zM610 328h2v3h-2zM612 328h1v9h-1zM613 328h2v2h-2zM615 328h2v26h-2zM617 328h2v4h-2zM619 328h1v48h-1zM622 328h2v32h-2zM626 328h2v3h-2zM628 328h2v9h-2zM630 328h2v5h-2zM632 328h2v23h-2zM636 328h1v47h-1zM637 328h1v3h-1zM638 328h1v5h-1zM639 328h2v5h-2zM641 328h2v3h-2zM643 328h2v3h-2zM645 328h2v11h-2zM647 328h1v10h-1zM648 328h1v61h-1zM649 328h2v3h-2zM651 328h2v24h-2zM654 328h2v4h-2zM656 328h2v14h-2zM658 328h1v10h-1zM659 328h1v17h-1zM662 328h1v17h-1zM663 328h2v4h-2zM665 328h2v9h-2zM667 328h2v10h-2zM669 328h2v13h-2zM673 328h2v13h-2zM677 328h2v34h-2zM679 328h2v4h-2zM681 328h2v14h-2zM685 328h2v8h-2zM689 328h2v18h-2zM693 328h2v31h-2zM695 328h2v5h-2zM697 328h1v43h-1zM698 328h2v5h-2zM700 328h2v10h-2zM704 328h2v39h-2zM706 328h2v6h-2zM708 328h2v14h-2zM711 328h2v43h-2zM713 328h2v3h-2zM715 328h2v24h-2zM719 328h2v17h-2zM723 328h2v9h-2zM725 328h2v3h-2zM727 328h2v10h-2zM729 328h2v3h-2zM731 328h2v14h-2zM733 328h2v3h-2zM735 328h2v4h-2zM737 328h2v17h-2zM741 328h2v25h-2zM745 328h2v10h-2zM747 328h2v3h-2zM749 328h2v28h-2zM751 328h2v3h-2zM755 328h2v13h-2zM757 328h2v4h-2zM759 328h1v4h-1zM760 328h1v40h-1zM761 328h2v4h-2zM763 328h2v63h-2zM765 328h2v4h-2zM767 328h2v39h-2zM769 328h2v1h-2zM771 328h2v7h-2zM773 328h2v1h-2zM775 328h1v12h-1zM776 328h1v6h-1zM777 328h1v18h-1zM780 328h2v6h-2zM782 328h2v2h-2zM784 328h2v11h-2zM786 328h2v5h-2zM788 328h1v4h-1zM791 328h2v6h-2zM793 328h2v5h-2zM795 328h2v8h-2zM797 328h2v4h-2zM799 328h2v16h-2zM805 328h2v26h-2zM809 328h1v9h-1zM810 328h2v6h-2zM812 328h2v5h-2zM814 328h2v4h-2zM816 328h2v8h-2zM818 328h2v3h-2zM820 328h2v9h-2zM829 328h2v14h-2zM831 328h2v3h-2zM833 328h2v19h-2zM835 328h2v3h-2zM837 328h2v16h-2zM841 328h2v15h-2zM845 328h2v9h-2zM847 328h2v3h-2z"/>
<path fill="#5b76ab" d="M323 328h1v1h-1zM323 328h2v1h-2zM325 328h2v2h-2zM328 328h1v3h-1zM327 328h2v1h-2zM329 328h2v1h-2zM331 328h1v1h-1zM331 328h2v1h-2zM333 328h1v1h-1zM333 328h2v1h-2zM335 328h2v4h-2zM337 328h2v5h-2zM339 328h2v4h-2zM342 328h1v1h-1zM341 328h2v1h-2zM343 328h1v1h-1zM344 328h2v11h-2zM346 328h2v1h-2zM349 328h1v1h-1zM348 328h2v1h-2zM351 328h1v4h-1zM350 328h2v1h-2zM353 328h1v2h-1zM352 328h2v1h-2zM355 328h1v10h-1zM354 328h2v1h-2zM356 328h2v1h-2zM358 328h1v2h-1zM358 328h2v1h-2zM360 328h1v1h-1zM361 328h1v3h-1zM362 328h2v1h-2zM365 328h1v1h-1zM364 328h2v1h-2zM366 328h2v1h-2zM369 328h1v4h-1zM368 328h2v1h-2zM370 328h2v2h-2zM372 328h2v2h-2zM374 328h2v1h-2zM376 328h1v1h-1zM376 328h2v1h-2zM378 328h2v1h-2zM380 328h1v5h-1zM381 328h1v3h-1zM383 328h1v1h-1zM382 328h2v1h-2zM384 328h1v1h-1zM384 328h2v1h-2zM386 328h1v1h-1zM388 328h1v3h-1zM387 328h2v1h-2zM389 328h1v5h-1zM391 328h1v13h-1zM390 328h2v1h-2zM392 328h2v5h-2zM394 328h1v4h-1zM394 328h2v1h-2zM396 328h2v2h-2zM398 328h1v2h-1zM399 328h1v3h-1zM399 328h2v1h-2zM402 328h1v1h-1zM401 328h2v1h-2zM404 328h1v4h-1zM403 328h2v1h-2zM405 328h1v1h-1zM406 328h2v1h-2zM409 328h1v2h-1zM408 328h2v1h-2zM410 328h1v3h-1zM411 328h1v1h-1zM411 328h2v1h-2zM413 328h2v1h-2zM415 328h2v1h-2zM417 328h2v1h-2zM419 328h2v1h-2zM421 328h2v5h-2zM423 328h2v1h-2zM425 328h1v1h-1zM425 328h2v1h-2zM427 328h1v1h-1zM428 328h2v1h-2zM430 328h2v2h-2zM432 328h2v5h-2zM434 328h1v1h-1zM435 328h1v3h-1zM435 328h2v1h-2zM437 328h1v3h-1zM438 328h2v1h-2zM440 328h1v3h-1zM440 328h2v1h-2zM442 328h2v13h-2zM445 328h1v13h-1zM444 328h2v1h-2zM446 328h1v1h-1zM447 328h2v2h-2zM449 328h1v1h-1zM450 328h2v1h-2zM452 328h1v3h-1zM454 328h1v4h-1zM453 328h2v1h-2zM456 328h1v1h-1zM455 328h2v1h-2zM457 328h2v1h-2zM459 328h2v5h-2zM461 328h1v1h-1zM462 328h2v2h-2zM465 328h1v1h-1zM464 328h2v1h-2zM466 328h1v4h-1zM467 328h1v1h-1zM468 328h2v4h-2zM470 328h2v1h-2zM472 328h1v3h-1zM473 328h1v1h-1zM475 328h1v9h-1zM474 328h2v1h-2zM476 328h1v13h-1zM477 328h1v1h-1zM477 328h2v1h-2zM479 328h2v2h-2zM482 328h1v3h-1zM481 328h2v1h-2zM484 328h1v2h-1zM483 328h2v1h-2zM485 328h1v4h-1zM486 328h1v1h-1zM487 328h2v4h-2zM489 328h1v1h-1zM489 328h2v1h-2zM491 328h1v2h-1zM491 328h2v1h-2zM493 328h1v1h-1zM493 328h2v1h-2zM496 328h1v2h-1zM495 328h2v1h-2zM498 328h1v2h-1zM497 328h2v1h-2zM499 328h2v1h-2zM501 328h1v2h-1zM503 328h1v1h-1zM502 328h2v1h-2zM504 328h2v4h-2zM507 328h1v2h-1zM506 328h2v1h-2zM509 328h1v2h-1zM508 328h2v1h-2zM510 328h2v2h-2zM513 328h1v1h-1zM512 328h2v1h-2zM514 328h1v2h-1zM514 328h2v1h-2zM516 328h2v2h-2zM518 328h1v3h-1zM518 328h2v1h-2zM520 328h1v3h-1zM521 328h1v2h-1zM523 328h1v1h-1zM522 328h2v1h-2zM525 328h1v1h-1zM524 328h2v1h-2zM526 328h2v3h-2zM529 328h1v1h-1zM528 328h2v1h-2zM530 328h2v1h-2zM533 328h1v1h-1zM532 328h2v1h-2zM534 328h2v5h-2zM536 328h1v5h-1zM537 328h1v4h-1zM538 328h1v5h-1zM538 328h2v1h-2zM540 328h1v1h-1zM541 328h2v5h-2zM543 328h1v2h-1zM543 328h2v1h-2zM545 328h2v3h-2zM547 328h2v1h-2zM549 328h2v3h-2zM551 328h1v3h-1zM551 328h2v1h-2zM553 328h2v6h-2zM555 328h1v1h-1zM555 328h2v1h-2zM557 328h1v4h-1zM557 328h2v1h-2zM560 328h1v1h-1zM559 328h2v1h-2zM562 328h1v1h-1zM561 328h2v1h-2zM563 328h1v1h-1zM564 328h2v1h-2zM566 328h1v1h-1zM567 328h2v1h-2zM570 328h1v2h-1zM569 328h2v1h-2zM571 328h1v3h-1zM571 328h2v1h-2zM573 328h1v1h-1zM574 328h1v1h-1zM575 328h2v1h-2zM577 328h1v1h-1zM577 328h2v1h-2zM579 328h1v1h-1zM580 328h2v1h-2zM582 328h2v1h-2zM584 328h2v2h-2zM587 328h1v6h-1zM586 328h2v1h-2zM588 328h2v1h-2zM590 328h1v1h-1zM591 328h2v3h-2zM593 328h2v2h-2zM595 328h1v1h-1zM596 328h1v2h-1zM597 328h1v1h-1zM597 328h2v1h-2zM600 328h1v1h-1zM599 328h2v1h-2zM601 328h1v1h-1zM601 328h2v1h-2zM603 328h2v4h-2zM605 328h1v1h-1zM607 328h1v1h-1zM606 328h2v1h-2zM608 328h1v1h-1zM608 328h2v1h-2zM610 328h2v1h-2zM612 328h1v3h-1zM613 328h2v1h-2zM615 328h1v4h-1zM615 328h2v1h-2zM618 328h1v1h-1zM617 328h2v1h-2zM619 328h1v7h-1zM620 328h2v6h-2zM623 328h1v1h-1zM622 328h2v1h-2zM624 328h2v1h-2zM627 328h1v1h-1zM626 328h2v1h-2zM628 328h2v1h-2zM630 328h1v1h-1zM630 328h2v1h-2zM633 328h1v5h-1zM632 328h2v1h-2zM635 328h1v1h-1zM634 328h2v1h-2zM636 328h1v3h-1zM637 328h1v1h-1zM638 328h1v3h-1zM639 328h2v3h-2zM641 328h2v1h-2zM643 328h1v1h-1zM643 328h2v1h-2zM645 328h2v1h-2zM647 328h1v1h-1zM648 328h1v2h-1zM649 328h2v1h-2zM652 328h1v1h-1zM651 328h2v1h-2zM653 328h1v1h-1zM654 328h2v2h-2zM657 328h1v1h-1zM656 328h2v1h-2zM658 328h1v10h-1zM659 328h1v2h-1zM660 328h2v1h-2zM662 328h1v2h-1zM663 328h2v2h-2zM665 328h1v5h-1zM665 328h2v1h-2zM668 328h1v1h-1zM667 328h2v1h-2zM669 328h2v6h-2zM671 328h2v1h-2zM673 328h1v3h-1zM673 328h2v1h-2zM675 328h2v1h-2zM677 328h2v11h-2zM680 328h1v2h-1zM679 328h2v1h-2zM681 328h2v1h-2zM683 328h1v7h-1zM683 328h2v1h-2zM685 328h2v1h-2zM687 328h2v9h-2zM689 328h2v5h-2zM692 328h1v4h-1zM691 328h2v1h-2zM693 328h2v1h-2zM695 328h2v1h-2zM697 328h1v5h-1zM698 328h1v2h-1zM698 328h2v1h-2zM700 328h2v1h-2zM703 328h1v1h-1zM702 328h2v1h-2zM704 328h2v1h-2zM706 328h1v5h-1zM706 328h2v1h-2zM708 328h2v4h-2zM710 328h1v2h-1zM711 328h2v7h-2zM714 328h1v1h-1zM713 328h2v1h-2zM716 328h1v1h-1zM715 328h2v1h-2zM717 328h2v2h-2zM719 328h2v1h-2zM721 328h2v3h-2zM723 328h2v4h-2zM725 328h2v1h-2zM727 328h1v1h-1zM727 328h2v1h-2zM730 328h1v1h-1zM729 328h2v1h-2zM731 328h1v5h-1zM731 328h2v1h-2zM734 328h1v3h-1zM733 328h2v1h-2zM735 328h1v1h-1zM735 328h2v1h-2zM737 328h1v1h-1zM737 328h2v1h-2zM739 328h2v1h-2zM741 328h2v4h-2zM743 328h2v1h-2zM745 328h2v1h-2zM747 328h2v1h-2zM750 328h1v1h-1zM749 328h2v1h-2zM752 328h1v1h-1zM751 328h2v1h-2zM753 328h2v1h-2zM755 328h2v1h-2zM758 328h1v1h-1zM757 328h2v1h-2zM759 328h1v2h-1zM760 328h1v1h-1zM761 328h1v4h-1zM761 328h2v1h-2zM764 328h1v6h-1zM763 328h2v1h-2zM765 328h1v2h-1zM765 328h2v1h-2zM768 328h1v1h-1zM767 328h2v1h-2zM769 328h1v1h-1zM769 328h2v1h-2zM771 328h1v5h-1zM771 328h2v1h-2zM773 328h2v1h-2zM775 328h1v1h-1zM776 328h1v1h-1zM777 328h1v1h-1zM778 328h2v1h-2zM781 328h1v2h-1zM780 328h2v1h-2zM782 328h2v2h-2zM784 328h2v1h-2zM786 328h2v3h-2zM788 328h1v1h-1zM789 328h1v3h-1zM789 328h2v1h-2zM791 328h2v1h-2zM794 328h1v3h-1zM793 328h2v1h-2zM795 328h2v2h-2zM797 328h2v2h-2zM799 328h1v1h-1zM799 328h2v1h-2zM801 328h2v1h-2zM803 328h1v1h-1zM803 328h2v1h-2zM805 328h1v1h-1zM805 328h2v1h-2zM807 328h2v4h-2zM809 328h1v1h-1zM810 328h2v4h-2zM813 328h1v1h-1zM812 328h2v1h-2zM815 328h1v2h-1zM814 328h2v1h-2zM816 328h1v2h-1zM816 328h2v1h-2zM818 328h1v1h-1zM818 328h2v1h-2zM820 328h2v1h-2zM822 328h1v1h-1zM823 328h2v2h-2zM825 328h2v1h-2zM828 328h1v1h-1zM827 328h2v1h-2zM829 328h1v1h-1zM829 328h2v1h-2zM831 328h2v1h-2zM833 328h2v1h-2zM835 328h2v1h-2zM837 328h2v1h-2zM840 328h1v1h-1zM839 328h2v1h-2zM842 328h1v3h-1zM841 328h2v1h-2zM843 328h2v1h-2zM845 328h2v1h-2zM847 328h2v1h-2z"/>
<path fill="#9fb1d8" d="M323 619h2v-7h-2zM325 619h2v-31h-2zM329 619h2v-9h-2zM331 619h1v-2h-1zM332 619h1v-16h-1zM333 619h2v-8h-2zM335 619h2v-22h-2zM339 619h1v-24h-1zM340 619h1v-8h-1zM341 619h2v-8h-2zM343 619h2v-5h-2zM345 619h2v-4h-2zM347 619h1v-15h-1zM348 619h2v-2h-2zM350 619h2v-12h-2zM352 619h2v-4h-2zM354 619h2v-7h-2zM356 619h1v-3h-1zM357 619h2v-49h-2zM361 619h2v-43h-2zM364 619h2v-42h-2zM366 619h2v-3h-2zM368 619h1v-10h-1zM371 619h2v-14h-2zM375 619h2v-5h-2zM377 619h2v-8h-2zM379 619h2v-24h-2zM383 619h2v-14h-2zM387 619h2v-4h-2zM389 619h2v-20h-2zM391 619h1v-10h-1zM396 619h2v-16h-2zM398 619h2v-7h-2zM400 619h2v-7h-2zM404 619h2v-16h-2zM406 619h2v-6h-2zM408 619h2v-20h-2zM411 619h2v-8h-2zM413 619h2v-1h-2zM415 619h2v-3h-2zM417 619h2v-28h-2zM419 619h2v-10h-2zM421 619h2v-32h-2zM423 619h2v-10h-2zM425 619h2v-18h-2zM429 619h1v-23h-1zM431 619h2v-14h-2zM435 619h1v-15h-1zM436 619h2v-2h-2zM438 619h2v-18h-2zM440 619h2v-7h-2zM442 619h2v-35h-2zM446 619h2v-2h-2zM448 619h1v-29h-1zM451 619h2v-43h-2zM457 619h2v-44h-2zM459 619h2v-7h-2zM461 619h2v-22h-2zM463 619h2v-2h-2zM465 619h1v-8h-1zM468 619h2v-39h-2zM472 619h2v-10h-2zM476 619h1v-2h-1zM477 619h2v-28h-2zM479 619h1v-5h-1zM482 619h2v-2h-2zM484 619h2v-13h-2zM488 619h2v-1h-2zM491 619h2v-21h-2zM497 619h2v-7h-2zM499 619h2v-1h-2zM501 619h2v-11h-2zM504 619h1v-8h-1zM507 619h1v-3h-1zM508 619h2v-18h-2zM512 619h2v-18h-2zM514 619h2v-18h-2zM519 619h2v-41h-2zM521 619h2v-9h-2zM523 619h2v-11h-2zM525 619h2v-3h-2zM527 619h2v-13h-2zM529 619h2v-2h-2zM531 619h2v-10h-2zM533 619h2v-4h-2zM535 619h1v-11h-1zM536 619h2v-7h-2zM538 619h2v-26h-2zM542 619h2v-7h-2zM544 619h1v-5h-1zM547 619h2v-17h-2zM549 619h2v-4h-2zM551 619h2v-11h-2zM553 619h2v-6h-2zM555 619h2v-9h-2zM558 619h2v-13h-2zM560 619h1v-6h-1zM561 619h2v-57h-2zM565 619h2v-23h-2zM567 619h2v-4h-2zM571 619h2v-10h-2zM573 619h2v-5h-2zM575 619h2v-26h-2zM583 619h2v-45h-2zM587 619h2v-9h-2zM589 619h2v-3h-2zM591 619h2v-14h-2zM595 619h2v-24h-2zM597 619h2v-3h-2zM599 619h2v-8h-2zM601 619h2v-5h-2zM603 619h2v-12h-2zM605 619h2v-2h-2zM611 619h2v-35h-2zM613 619h2v-4h-2zM615 619h1v-7h-1zM616 619h2v-4h-2zM618 619h2v-19h-2zM620 619h2v-4h-2zM622 619h1v-12h-1zM623 619h2v-6h-2zM625 619h1v-50h-1zM626 619h2v-3h-2zM628 619h2v-3h-2zM630 619h1v-11h-1zM631 619h2v-4h-2zM633 619h2v-10h-2zM635 619h2v-2h-2zM637 619h2v-48h-2zM639 619h2v-10h-2zM641 619h1v-36h-1zM642 619h2v-11h-2zM648 619h1v-14h-1zM651 619h2v-5h-2zM653 619h1v-11h-1zM654 619h2v-3h-2zM656 619h1v-9h-1zM657 619h2v-22h-2zM659 619h2v-2h-2zM661 619h2v-9h-2zM663 619h2v-4h-2zM665 619h2v-32h-2zM669 619h2v-31h-2zM673 619h2v-17h-2zM677 619h2v-11h-2zM679 619h2v-7h-2zM681 619h2v-13h-2zM685 619h2v-28h-2zM687 619h1v-7h-1zM688 619h2v-48h-2zM690 619h2v-3h-2zM692 619h2v-24h-2zM694 619h2v-5h-2zM696 619h1v-30h-1zM700 619h2v-40h-2zM702 619h2v-3h-2zM704 619h2v-20h-2zM706 619h2v-4h-2zM710 619h1v-3h-1zM711 619h2v-18h-2zM715 619h2v-16h-2zM718 619h2v-10h-2zM720 619h2v-9h-2zM722 619h2v-23h-2zM726 619h2v-6h-2zM728 619h2v-12h-2zM730 619h1v-2h-1zM731 619h2v-12h-2zM734 619h2v-25h-2zM736 619h2v-2h-2zM738 619h2v-29h-2zM740 619h2v-10h-2zM742 619h2v-16h-2zM746 619h1v-6h-1zM747 619h2v-27h-2zM749 619h2v-5h-2zM752 619h2v-28h-2zM756 619h2v-15h-2zM758 619h2v-7h-2zM760 619h2v-13h-2zM762 619h2v-1h-2zM764 619h1v-35h-1zM765 619h2v-4h-2zM767 619h1v-20h-1zM770 619h2v-28h-2zM774 619h1v-5h-1zM777 619h2v-4h-2zM779 619h2v-2h-2zM781 619h2v-6h-2zM783 619h2v-3h-2zM787 619h2v-20h-2zM791 619h2v-4h-2zM795 619h2v-19h-2zM798 619h2v-7h-2zM800 619h1v-2h-1zM801 619h2v-13h-2zM805 619h1v-4h-1zM810 619h2v-12h-2zM814 619h1v-26h-1zM815 619h1v-6h-1zM816 619h2v-8h-2zM820 619h2v-14h-2zM823 619h2v-4h-2zM827 619h2v-26h-2zM833 619h2v-4h-2zM835 619h2v-4h-2zM839 619h1v-24h-1zM840 619h2v-1h-2zM844 619h1v-19h-1zM847 619h2v-24h-2z"/>
<path fill="#5b76ab" d="M323 619h2v-5h-2zM325 619h2v-3h-2zM328 619h1v-1h-1zM334 619h1v-6h-1zM337 619h1v-8h-1zM339 619h1v-3h-1zM341 619h2v-2h-2zM344 619h1v-2h-1zM354 619h2v-2h-2zM360 619h1v-5h-1zM362 619h1v-1h-1zM363 619h1v-12h-1zM364 619h2v-3h-2zM368 619h1v-5h-1zM375 619h1v-3h-1zM377 619h2v-5h-2zM391 619h1v-8h-1zM396 619h2v-4h-2zM398 619h1v-5h-1zM401 619h1v-3h-1zM406 619h2v-4h-2zM415 619h1v-1h-1zM419 619h1v-1h-1zM425 619h2v-3h-2zM430 619h1v-1h-1zM431 619h1v-8h-1zM436 619h2v-2h-2zM438 619h1v-4h-1zM441 619h1v-5h-1zM444 619h2v-5h-2zM448 619h1v-9h-1zM451 619h2v-3h-2zM460 619h1v-5h-1zM461 619h2v-6h-2zM465 619h1v-2h-1zM466 619h2v-1h-2zM470 619h1v-6h-1zM495 619h1v-7h-1zM503 619h1v-1h-1zM504 619h1v-5h-1zM506 619h1v-1h-1zM510 619h2v-3h-2zM512 619h1v-8h-1zM514 619h2v-16h-2zM517 619h1v-1h-1zM518 619h1v-6h-1zM519 619h2v-1h-2zM521 619h2v-9h-2zM526 619h1v-1h-1zM534 619h1v-2h-1zM535 619h1v-5h-1zM544 619h1v-3h-1zM551 619h2v-3h-2zM554 619h1v-6h-1zM555 619h1v-1h-1zM557 619h1v-1h-1zM558 619h2v-5h-2zM560 619h1v-6h-1zM561 619h2v-9h-2zM566 619h1v-3h-1zM568 619h1v-1h-1zM571 619h1v-1h-1zM573 619h2v-3h-2zM575 619h1v-1h-1zM579 619h2v-1h-2zM583 619h2v-1h-2zM587 619h2v-9h-2zM592 619h1v-2h-1zM597 619h1v-3h-1zM601 619h2v-3h-2zM613 619h2v-2h-2zM625 619h1v-6h-1zM626 619h2v-3h-2zM628 619h1v-3h-1zM630 619h1v-11h-1zM641 619h1v-2h-1zM642 619h2v-9h-2zM644 619h2v-5h-2zM646 619h2v-4h-2zM648 619h1v-1h-1zM653 619h1v-3h-1zM656 619h1v-9h-1zM657 619h2v-4h-2zM671 619h1v-4h-1zM677 619h1v-7h-1zM679 619h2v-5h-2zM691 619h1v-3h-1zM692 619h1v-2h-1zM694 619h2v-3h-2zM699 619h1v-2h-1zM704 619h1v-1h-1zM706 619h2v-4h-2zM708 619h2v-1h-2zM717 619h1v-2h-1zM728 619h2v-5h-2zM730 619h1v-1h-1zM731 619h2v-8h-2zM733 619h1v-10h-1zM734 619h2v-8h-2zM738 619h1v-4h-1zM740 619h2v-1h-2zM742 619h1v-16h-1zM749 619h1v-3h-1zM758 619h2v-3h-2zM764 619h1v-4h-1zM768 619h2v-3h-2zM770 619h1v-1h-1zM772 619h2v-1h-2zM781 619h1v-4h-1zM784 619h1v-1h-1zM785 619h2v-1h-2zM791 619h1v-2h-1zM797 619h1v-7h-1zM800 619h1v-1h-1zM805 619h1v-1h-1zM815 619h1v-4h-1zM829 619h2v-1h-2zM831 619h2v-1h-2zM835 619h2v-4h-2zM841 619h1v-1h-1z"/>
<rect x="849" y="190" width="338" height="137" fill="#53a558"/>
<rect x="849" y="328" width="338" height="291" fill="#53a558"/>
<path fill="#4a8b4f" d="M871 190h2v2h-2zM886 190h2v3h-2zM897 190h2v4h-2zM901 190h2v2h-2zM905 190h2v3h-2zM913 190h2v7h-2zM928 190h1v3h-1zM933 190h2v3h-2zM937 190h2v5h-2zM943 190h2v3h-2zM949 190h2v5h-2zM954 190h2v1h-2zM960 190h2v6h-2zM972 190h2v3h-2zM978 190h2v2h-2zM982 190h2v3h-2zM986 190h1v7h-1zM990 190h1v2h-1zM993 190h2v3h-2zM1004 190h2v2h-2zM1015 190h2v4h-2zM1020 190h2v1h-2zM1030 190h2v3h-2zM1035 190h2v2h-2zM1052 190h2v2h-2zM1058 190h1v3h-1zM1062 190h2v5h-2zM1066 190h2v2h-2zM1071 190h1v5h-1zM1081 190h2v2h-2zM1089 190h2v2h-2zM1099 190h2v3h-2zM1103 190h2v1h-2zM1128 190h2v3h-2zM1136 190h2v1h-2zM1142 190h2v1h-2zM1149 190h2v5h-2zM1160 190h2v5h-2zM1167 190h2v2h-2zM1175 190h1v2h-1zM1179 190h1v2h-1zM1184 190h2v4h-2z"/>
<path fill="url(#bgT)" d="M858 190h1v1h-1zM859 190h2v2h-2zM866 190h1v1h-1zM869 190h1v1h-1zM882 190h1v2h-1zM886 190h1v2h-1zM888 190h1v2h-1zM895 190h2v1h-2zM905 190h2v1h-2zM907 190h2v1h-2zM917 190h1v2h-1zM918 190h2v1h-2zM928 190h1v3h-1zM930 190h1v3h-1zM937 190h2v3h-2zM948 190h1v1h-1zM957 190h1v2h-1zM958 190h2v1h-2zM968 190h2v1h-2zM970 190h2v1h-2zM972 190h2v1h-2zM974 190h2v1h-2zM991 190h1v1h-1zM1002 190h1v1h-1zM1006 190h1v1h-1zM1015 190h1v1h-1zM1027 190h1v3h-1zM1028 190h2v1h-2zM1039 190h2v1h-2zM1043 190h1v1h-1zM1054 190h2v1h-2zM1056 190h1v1h-1zM1061 190h1v2h-1zM1062 190h2v3h-2zM1068 190h2v3h-2zM1078 190h2v1h-2zM1080 190h1v2h-1zM1084 190h1v1h-1zM1085 190h2v3h-2zM1096 190h1v1h-1zM1097 190h1v1h-1zM1107 190h1v2h-1zM1108 190h1v2h-1zM1111 190h1v1h-1zM1114 190h1v1h-1zM1121 190h1v2h-1zM1127 190h1v1h-1zM1130 190h2v1h-2zM1140 190h1v1h-1zM1150 190h1v2h-1zM1155 190h2v3h-2zM1159 190h1v1h-1zM1160 190h2v3h-2zM1166 190h1v1h-1zM1170 190h1v1h-1zM1176 190h2v1h-2zM1179 190h1v1h-1zM1184 190h1v2h-1zM1186 190h1v3h-1z"/>
<path fill="#4a8b4f" d="M858 327h2v-2h-2zM870 327h2v-2h-2zM874 327h2v-4h-2zM877 327h2v-8h-2zM893 327h2v-2h-2zM903 327h2v-10h-2zM913 327h2v-3h-2zM944 327h2v-4h-2zM956 327h2v-5h-2zM973 327h1v-2h-1zM978 327h1v-2h-1zM981 327h2v-5h-2zM986 327h2v-2h-2zM1001 327h1v-5h-1zM1013 327h2v-2h-2zM1028 327h2v-4h-2zM1032 327h2v-4h-2zM1037 327h1v-2h-1zM1042 327h2v-6h-2zM1050 327h2v-2h-2zM1080 327h2v-5h-2zM1088 327h2v-4h-2zM1098 327h1v-2h-1zM1104 327h2v-5h-2zM1111 327h2v-5h-2zM1118 327h2v-2h-2zM1123 327h2v-2h-2zM1126 327h1v-2h-1zM1129 327h1v-2h-1zM1132 327h1v-6h-1zM1145 327h2v-5h-2zM1155 327h1v-2h-1zM1160 327h2v-2h-2zM1168 327h2v-2h-2zM1178 327h2v-2h-2z"/>
<path fill="url(#bgT)" d="M849 327h2v-1h-2zM854 327h1v-1h-1zM862 327h1v-2h-1zM863 327h2v-1h-2zM879 327h2v-1h-2zM885 327h1v-2h-1zM890 327h1v-1h-1zM895 327h1v-2h-1zM896 327h2v-1h-2zM904 327h1v-1h-1zM909 327h2v-2h-2zM911 327h1v-1h-1zM914 327h1v-1h-1zM923 327h1v-1h-1zM925 327h1v-1h-1zM937 327h2v-2h-2zM943 327h1v-2h-1zM947 327h1v-1h-1zM995 327h2v-3h-2zM997 327h2v-2h-2zM999 327h1v-2h-1zM1001 327h1v-3h-1zM1002 327h2v-2h-2zM1004 327h1v-3h-1zM1018 327h1v-1h-1zM1022 327h1v-1h-1zM1025 327h1v-2h-1zM1041 327h1v-1h-1zM1048 327h1v-1h-1zM1052 327h2v-1h-2zM1057 327h1v-1h-1zM1065 327h1v-1h-1zM1066 327h2v-1h-2zM1072 327h2v-3h-2zM1081 327h1v-2h-1zM1111 327h2v-3h-2zM1125 327h1v-2h-1zM1130 327h2v-2h-2zM1136 327h1v-1h-1zM1143 327h2v-1h-2zM1151 327h2v-1h-2zM1153 327h1v-1h-1zM1159 327h1v-3h-1zM1174 327h1v-1h-1zM1184 327h1v-4h-1zM1186 327h1v-1h-1z"/>
<path fill="#4a8b4f" d="M849 328h2v10h-2zM882 328h1v8h-1zM885 328h2v5h-2zM888 328h2v4h-2zM891 328h1v4h-1zM894 328h2v4h-2zM902 328h1v8h-1zM904 328h2v6h-2zM924 328h1v13h-1zM930 328h2v4h-2zM938 328h1v4h-1zM941 328h2v16h-2zM947 328h2v2h-2zM956 328h1v13h-1zM958 328h1v4h-1zM966 328h2v3h-2zM970 328h2v7h-2zM975 328h2v12h-2zM980 328h2v2h-2zM983 328h2v7h-2zM987 328h1v5h-1zM997 328h2v7h-2zM1001 328h1v3h-1zM1004 328h1v3h-1zM1008 328h1v9h-1zM1011 328h1v9h-1zM1013 328h2v3h-2zM1023 328h2v8h-2zM1039 328h1v5h-1zM1047 328h2v2h-2zM1058 328h1v2h-1zM1068 328h2v3h-2zM1073 328h2v6h-2zM1084 328h2v2h-2zM1094 328h2v1h-2zM1098 328h1v1h-1zM1115 328h1v4h-1zM1127 328h1v1h-1zM1139 328h1v2h-1zM1146 328h1v3h-1zM1148 328h2v2h-2zM1153 328h1v2h-1zM1156 328h2v2h-2zM1174 328h2v2h-2zM1179 328h1v2h-1zM1181 328h1v4h-1z"/>
<path fill="url(#bgB)" d="M849 328h2v1h-2zM851 328h1v1h-1zM854 328h1v2h-1zM855 328h1v2h-1zM856 328h1v6h-1zM868 328h1v2h-1zM871 328h1v1h-1zM875 328h1v3h-1zM879 328h1v1h-1zM881 328h1v3h-1zM883 328h2v2h-2zM891 328h1v2h-1zM902 328h1v3h-1zM903 328h1v4h-1zM904 328h1v4h-1zM912 328h2v2h-2zM914 328h2v5h-2zM917 328h1v1h-1zM921 328h1v1h-1zM922 328h1v2h-1zM923 328h1v1h-1zM925 328h1v2h-1zM933 328h1v1h-1zM935 328h1v2h-1zM937 328h1v2h-1zM938 328h1v2h-1zM940 328h1v4h-1zM941 328h1v2h-1zM943 328h1v2h-1zM952 328h1v5h-1zM954 328h2v2h-2zM964 328h2v2h-2zM966 328h2v1h-2zM968 328h2v1h-2zM973 328h1v2h-1zM975 328h1v2h-1zM984 328h1v5h-1zM986 328h1v4h-1zM987 328h1v1h-1zM990 328h1v2h-1zM996 328h1v2h-1zM999 328h1v1h-1zM1003 328h1v2h-1zM1005 328h1v3h-1zM1007 328h1v2h-1zM1009 328h1v2h-1zM1017 328h1v4h-1zM1018 328h1v2h-1zM1020 328h2v3h-2zM1022 328h1v5h-1zM1023 328h1v2h-1zM1027 328h1v2h-1zM1030 328h1v4h-1zM1031 328h1v1h-1zM1032 328h1v1h-1zM1037 328h2v3h-2zM1039 328h1v5h-1zM1045 328h1v1h-1zM1059 328h1v1h-1zM1061 328h2v1h-2zM1068 328h2v1h-2zM1081 328h2v1h-2zM1084 328h1v1h-1zM1093 328h1v1h-1zM1100 328h1v1h-1zM1102 328h1v1h-1zM1105 328h2v1h-2zM1115 328h1v1h-1zM1120 328h2v1h-2zM1126 328h1v1h-1zM1127 328h1v1h-1zM1130 328h2v1h-2zM1141 328h1v1h-1zM1142 328h2v1h-2zM1146 328h1v1h-1zM1147 328h1v1h-1zM1150 328h1v1h-1zM1155 328h1v2h-1zM1163 328h1v1h-1zM1165 328h1v1h-1zM1173 328h1v1h-1zM1176 328h1v1h-1z"/>
<path fill="#4a8b4f" d="M849 619h2v-2h-2zM860 619h2v-6h-2zM865 619h1v-1h-1zM870 619h2v-2h-2zM879 619h1v-6h-1zM887 619h1v-4h-1zM895 619h1v-3h-1zM900 619h1v-3h-1zM905 619h1v-2h-1zM908 619h1v-2h-1zM914 619h1v-3h-1zM929 619h1v-3h-1zM934 619h2v-3h-2zM938 619h2v-7h-2zM943 619h1v-2h-1zM946 619h1v-2h-1zM952 619h1v-6h-1zM959 619h1v-2h-1zM964 619h2v-6h-2zM971 619h1v-5h-1zM973 619h2v-9h-2zM978 619h2v-3h-2zM982 619h1v-2h-1zM984 619h1v-5h-1zM991 619h2v-3h-2zM1005 619h1v-15h-1zM1016 619h1v-2h-1zM1019 619h1v-3h-1zM1021 619h1v-4h-1zM1024 619h2v-2h-2zM1028 619h1v-3h-1zM1032 619h1v-4h-1zM1035 619h2v-3h-2zM1051 619h1v-2h-1zM1063 619h1v-3h-1zM1066 619h1v-2h-1zM1069 619h1v-1h-1zM1073 619h1v-2h-1zM1078 619h1v-2h-1zM1081 619h1v-3h-1zM1083 619h1v-5h-1zM1089 619h2v-2h-2zM1093 619h1v-3h-1zM1095 619h1v-3h-1zM1097 619h1v-2h-1zM1112 619h2v-2h-2zM1115 619h1v-1h-1zM1120 619h1v-2h-1zM1130 619h2v-2h-2zM1134 619h1v-2h-1zM1136 619h1v-3h-1zM1150 619h1v-1h-1zM1156 619h1v-3h-1zM1161 619h1v-2h-1zM1167 619h1v-2h-1zM1182 619h2v-1h-2zM1186 619h1v-2h-1z"/>
<path fill="url(#bgB)" d="M855 619h1v-1h-1zM866 619h1v-2h-1zM867 619h1v-2h-1zM876 619h1v-2h-1zM879 619h1v-1h-1zM880 619h2v-1h-2zM891 619h1v-1h-1zM900 619h1v-2h-1zM908 619h1v-1h-1zM914 619h1v-1h-1zM920 619h2v-1h-2zM926 619h1v-1h-1zM933 619h1v-1h-1zM938 619h2v-1h-2zM941 619h1v-1h-1zM944 619h1v-1h-1zM949 619h1v-2h-1zM951 619h1v-3h-1zM952 619h1v-1h-1zM960 619h1v-1h-1zM966 619h1v-1h-1zM969 619h1v-2h-1zM971 619h1v-1h-1zM973 619h2v-1h-2zM975 619h2v-1h-2zM979 619h1v-1h-1zM982 619h1v-1h-1zM984 619h1v-3h-1zM992 619h1v-1h-1zM1001 619h1v-1h-1zM1005 619h1v-2h-1zM1020 619h1v-1h-1zM1021 619h1v-2h-1zM1022 619h2v-2h-2zM1024 619h2v-2h-2zM1030 619h2v-1h-2zM1032 619h1v-2h-1zM1042 619h1v-1h-1zM1046 619h1v-1h-1zM1057 619h1v-1h-1zM1058 619h1v-1h-1zM1062 619h1v-1h-1zM1063 619h1v-1h-1zM1070 619h1v-1h-1zM1071 619h1v-1h-1zM1074 619h1v-1h-1zM1075 619h1v-1h-1zM1077 619h1v-1h-1zM1081 619h1v-1h-1zM1082 619h1v-1h-1zM1084 619h1v-1h-1zM1086 619h1v-1h-1zM1093 619h1v-1h-1zM1095 619h1v-1h-1zM1096 619h1v-1h-1zM1098 619h2v-1h-2zM1104 619h2v-1h-2zM1106 619h1v-1h-1zM1115 619h1v-1h-1zM1132 619h1v-1h-1zM1134 619h1v-1h-1zM1137 619h2v-1h-2zM1148 619h1v-1h-1zM1157 619h2v-1h-2zM1162 619h1v-1h-1zM1166 619h1v-1h-1zM1173 619h2v-1h-2z"/>
<path fill="#4a8b4f" d="M7 240L8 240L8 239.5L9 239.5L9 234.8L10 234.8L10 233.1L11 233.1L11 232.9L12 232.9L12 240.4L13 240.4L13 233.9L14 233.9L14 236.5L15 236.5L15 238.6L16 238.6L16 240.4L17 240.4L17 235.6L18 235.6L18 237.4L19 237.4L19 239.7L20 239.7L20 237.4L21 237.4L21 240.3L22 240.3L22 233.2L23 233.2L23 234.3L24 234.3L24 235.5L25 235.5L25 232.6L26 232.6L26 239.9L27 239.9L27 237.8L28 237.8L28 233L29 233L29 233.6L30 233.6L30 236.4L31 236.4L31 240.2L32 240.2L32 237.7L33 237.7L33 237.2L34 237.2L34 237.3L35 237.3L35 239.3L36 239.3L36 239.7L37 239.7L37 239.2L38 239.2L38 239.5L39 239.5L39 232.9L40 232.9L40 277.7L39 277.7L39 281.7L38 281.7L38 279.8L37 279.8L37 280.6L36 280.6L36 277.9L35 277.9L35 280.8L34 280.8L34 280.2L33 280.2L33 284.6L32 284.6L32 277.5L31 277.5L31 282.1L30 282.1L30 277.8L29 277.8L29 279.3L28 279.3L28 282.9L27 282.9L27 281.6L26 281.6L26 279.6L25 279.6L25 284.7L24 284.7L24 280.7L23 280.7L23 277.8L22 277.8L22 283.5L21 283.5L21 281.3L20 281.3L20 278.3L19 278.3L19 283.2L18 283.2L18 277.5L17 277.5L17 284.5L16 284.5L16 284L15 284L15 281.8L14 281.8L14 280.8L13 280.8L13 279.5L12 279.5L12 277.5L11 277.5L11 277.9L10 277.9L10 285.3L9 285.3L9 278.3L8 278.3L8 278.1L7 278.1Z"/>
<path fill="#53a558" d="M7 241.6L8 241.6L8 242.5L9 242.5L9 239.1L10 239.1L10 236.8L11 236.8L11 233.1L12 233.1L12 243.5L13 243.5L13 236.1L14 236.1L14 240.1L15 240.1L15 243.5L16 243.5L16 243.5L17 243.5L17 237.7L18 237.7L18 238.8L19 238.8L19 242.5L20 242.5L20 240.2L21 240.2L21 241.1L22 241.1L22 236.6L23 236.6L23 239L24 239L24 236.5L25 236.5L25 236L26 236L26 242.9L27 242.9L27 239L28 239L28 237.8L29 237.8L29 234.4L30 234.4L30 240.8L31 240.8L31 240.6L32 240.6L32 242.7L33 242.7L33 238.7L34 238.7L34 241.2L35 241.2L35 243L36 243L36 243.4L37 243.4L37 243.5L38 243.5L38 241L39 241L39 235.4L40 235.4L40 274.8L39 274.8L39 276.9L38 276.9L38 277.7L37 277.7L37 277.8L36 277.8L36 277.9L35 277.9L35 277.3L34 277.3L34 280.1L33 280.1L33 284L32 284L32 274.5L31 274.5L31 279.3L30 279.3L30 274.7L29 274.7L29 279L28 279L28 280.4L27 280.4L27 278.5L26 278.5L26 279.2L25 279.2L25 283.9L24 283.9L24 277.9L23 277.9L23 274.5L22 274.5L22 283.2L21 283.2L21 280.9L20 280.9L20 276.5L19 276.5L19 279.3L18 279.3L18 277.2L17 277.2L17 282.7L16 282.7L16 280.1L15 280.1L15 279.5L14 279.5L14 277.8L13 277.8L13 278.9L12 278.9L12 274.5L11 274.5L11 275.9L10 275.9L10 283L9 283L9 274.5L8 274.5L8 274.7L7 274.7Z"/>
<path fill="#4a8b4f" d="M7 435.9L8 435.9L8 435.9L9 435.9L9 422.9L10 422.9L10 434.9L11 434.9L11 428.3L12 428.3L12 433L13 433L13 433.8L14 433.8L14 432.8L15 432.8L15 427.7L16 427.7L16 432.9L17 432.9L17 433.3L18 433.3L18 432.9L19 432.9L19 422.1L20 422.1L20 418.7L21 418.7L21 424.4L22 424.4L22 424.4L23 424.4L23 432.5L24 432.5L24 425.2L25 425.2L25 426.5L26 426.5L26 418.3L27 418.3L27 434.8L28 434.8L28 437L29 437L29 430L30 430L30 425.7L31 425.7L31 433.6L32 433.6L32 418.8L33 418.8L33 435.3L34 435.3L34 427.2L35 427.2L35 422.1L36 422.1L36 418.4L37 418.4L37 432.4L38 432.4L38 425.1L39 425.1L39 436L40 436L40 515L39 515L39 524.7L38 524.7L38 519.6L37 519.6L37 511.3L36 511.3L36 516.3L35 516.3L35 515.6L34 515.6L34 520.2L33 520.2L33 518.3L32 518.3L32 518.9L31 518.9L31 526.8L30 526.8L30 524.2L29 524.2L29 513.8L28 513.8L28 514.6L27 514.6L27 525.6L26 525.6L26 518.4L25 518.4L25 522.5L24 522.5L24 527.7L23 527.7L23 523.7L22 523.7L22 511L21 511L21 512.5L20 512.5L20 517.7L19 517.7L19 521.6L18 521.6L18 516.5L17 516.5L17 519.6L16 519.6L16 527.7L15 527.7L15 526L14 526L14 517.6L13 517.6L13 529.3L12 529.3L12 511.3L11 511.3L11 518.4L10 518.4L10 524L9 524L9 511.9L8 511.9L8 517.7L7 517.7Z"/>
<path fill="#53a558" d="M7 440L8 440L8 440L9 440L9 432L10 432L10 437.2L11 437.2L11 434.2L12 434.2L12 440L13 440L13 440L14 440L14 433.1L15 433.1L15 429.1L16 429.1L16 435.4L17 435.4L17 440L18 440L18 435L19 435L19 429.2L20 429.2L20 422.7L21 422.7L21 433.6L22 433.6L22 430.1L23 430.1L23 436.2L24 436.2L24 432.2L25 432.2L25 438.4L26 438.4L26 429.8L27 429.8L27 440L28 440L28 440L29 440L29 440L30 440L30 435.1L31 435.1L31 440L32 440L32 429L33 429L33 436.8L34 436.8L34 434.8L35 434.8L35 425.5L36 425.5L36 425.1L37 425.1L37 433.6L38 433.6L38 428.9L39 428.9L39 440L40 440L40 508L39 508L39 514L38 514L38 517.6L37 517.6L37 510.3L36 510.3L36 510.2L35 510.2L35 509.5L34 509.5L34 508L33 508L33 517L32 517L32 509.9L31 509.9L31 516L30 516L30 523.5L29 523.5L29 509.5L28 509.5L28 508L27 508L27 518.4L26 518.4L26 509.4L25 509.4L25 512.6L24 512.6L24 515.8L23 515.8L23 516.8L22 516.8L22 508L21 508L21 508L20 508L20 508.6L19 508.6L19 518.8L18 518.8L18 515L17 515L17 512.1L16 512.1L16 518.7L15 518.7L15 521.9L14 521.9L14 516L13 516L13 524.1L12 524.1L12 508L11 508L11 510.2L10 510.2L10 511L9 511L9 508L8 508L8 508L7 508Z"/>
<path fill="#4a8b4f" d="M1187 214.7L1188 214.7L1188 210.9L1189 210.9L1189 213.9L1190 213.9L1190 215.7L1191 215.7L1191 215.6L1192 215.6L1192 213.7L1193 213.7L1193 216.3L1194 216.3L1194 217L1195 217L1195 216L1196 216L1196 214.7L1197 214.7L1197 217L1198 217L1198 213.2L1199 213.2L1199 218.8L1200 218.8L1200 218.9L1201 218.9L1201 218L1202 218L1202 217.9L1203 217.9L1203 218.9L1204 218.9L1204 216.6L1205 216.6L1205 213.6L1206 213.6L1206 218.8L1207 218.8L1207 219.6L1208 219.6L1208 218.7L1209 218.7L1209 218.6L1210 218.6L1210 215.7L1211 215.7L1211 216.7L1212 216.7L1212 217.2L1213 217.2L1213 218.9L1214 218.9L1214 213.8L1215 213.8L1215 215.4L1216 215.4L1216 218.3L1217 218.3L1217 216.5L1218 216.5L1218 218.9L1219 218.9L1219 217.1L1220 217.1L1220 215.4L1221 215.4L1221 220.1L1222 220.1L1222 218.5L1223 218.5L1223 220.9L1224 220.9L1224 221.4L1225 221.4L1225 221.7L1226 221.7L1226 223.1L1227 223.1L1227 222.1L1228 222.1L1228 225L1229 225L1229 224.9L1230 224.9L1230 226.7L1231 226.7L1231 226.2L1232 226.2L1232 223.1L1233 223.1L1233 226L1234 226L1234 225.3L1235 225.3L1235 232.7L1236 232.7L1236 227.1L1237 227.1L1237 234.3L1238 234.3L1238 231.1L1239 231.1L1239 236.2L1240 236.2L1240 234.1L1241 234.1L1241 238.8L1242 238.8L1242 238.2L1243 238.2L1243 241.2L1244 241.2L1244 237.8L1245 237.8L1245 243.1L1246 243.1L1246 240.1L1247 240.1L1247 245L1248 245L1248 246.1L1249 246.1L1249 244.3L1250 244.3L1250 245.8L1251 245.8L1251 246L1252 246L1252 247.8L1253 247.8L1253 250.4L1254 250.4L1254 251.8L1255 251.8L1255 252.2L1256 252.2L1256 253.4L1257 253.4L1257 253.4L1258 253.4L1258 255.2L1259 255.2L1259 256.3L1260 256.3L1260 256.7L1261 256.7L1261 257.7L1262 257.7L1262 257.9L1263 257.9L1263 257.7L1264 257.7L1264 257.8L1265 257.8L1265 257.9L1266 257.9L1266 257.7L1267 257.7L1267 257.9L1268 257.9L1268 257.9L1269 257.9L1269 257.8L1270 257.8L1270 257.7L1271 257.7L1271 257.9L1272 257.9L1272 257.9L1273 257.9L1273 257.8L1274 257.8L1274 259.2L1273 259.2L1273 259.1L1272 259.1L1272 259.2L1271 259.2L1271 259.2L1270 259.2L1270 259.1L1269 259.1L1269 259.2L1268 259.2L1268 259.1L1267 259.1L1267 259.2L1266 259.2L1266 259.1L1265 259.1L1265 259.1L1264 259.1L1264 259.3L1263 259.3L1263 259.1L1262 259.1L1262 259.2L1261 259.2L1261 259.9L1260 259.9L1260 261.2L1259 261.2L1259 261.6L1258 261.6L1258 262.6L1257 262.6L1257 263.9L1256 263.9L1256 265L1255 265L1255 266L1254 266L1254 266.3L1253 266.3L1253 267L1252 267L1252 267.8L1251 267.8L1251 269.8L1250 269.8L1250 270.7L1249 270.7L1249 274.3L1248 274.3L1248 274.5L1247 274.5L1247 273.5L1246 273.5L1246 276.1L1245 276.1L1245 275.1L1244 275.1L1244 280.1L1243 280.1L1243 277.4L1242 277.4L1242 279.1L1241 279.1L1241 283.3L1240 283.3L1240 280.1L1239 280.1L1239 287.4L1238 287.4L1238 285L1237 285L1237 283.3L1236 283.3L1236 288.1L1235 288.1L1235 285.4L1234 285.4L1234 286.3L1233 286.3L1233 293.6L1232 293.6L1232 291.6L1231 291.6L1231 289.7L1230 289.7L1230 295.9L1229 295.9L1229 293.6L1228 293.6L1228 294.8L1227 294.8L1227 294.7L1226 294.7L1226 295.9L1225 295.9L1225 298.3L1224 298.3L1224 297.6L1223 297.6L1223 301.5L1222 301.5L1222 298.6L1221 298.6L1221 296.6L1220 296.6L1220 296.2L1219 296.2L1219 301.3L1218 301.3L1218 298.4L1217 298.4L1217 300.2L1216 300.2L1216 297.3L1215 297.3L1215 297.6L1214 297.6L1214 297.9L1213 297.9L1213 299.9L1212 299.9L1212 300.9L1211 300.9L1211 300.3L1210 300.3L1210 298.4L1209 298.4L1209 298.7L1208 298.7L1208 298L1207 298L1207 300.9L1206 300.9L1206 303.4L1205 303.4L1205 297.7L1204 297.7L1204 298.3L1203 298.3L1203 298.3L1202 298.3L1202 298.7L1201 298.7L1201 304L1200 304L1200 304.8L1199 304.8L1199 299.4L1198 299.4L1198 305.1L1197 305.1L1197 299.5L1196 299.5L1196 299.4L1195 299.4L1195 299.1L1194 299.1L1194 305.8L1193 305.8L1193 300.3L1192 300.3L1192 303.6L1191 303.6L1191 299.2L1190 299.2L1190 304L1189 304L1189 299.5L1188 299.5L1188 302L1187 302Z"/>
<path fill="#53a558" d="M1187 216.1L1188 216.1L1188 212L1189 212L1189 214.4L1190 214.4L1190 218.1L1191 218.1L1191 216L1192 216L1192 214L1193 214L1193 218.3L1194 218.3L1194 218.7L1195 218.7L1195 219.1L1196 219.1L1196 215L1197 215L1197 217.5L1198 217.5L1198 214.9L1199 214.9L1199 220.5L1200 220.5L1200 221L1201 221L1201 219.9L1202 219.9L1202 218.1L1203 218.1L1203 222.4L1204 222.4L1204 217.9L1205 217.9L1205 215.1L1206 215.1L1206 221.1L1207 221.1L1207 220.8L1208 220.8L1208 220.8L1209 220.8L1209 221L1210 221L1210 216.2L1211 216.2L1211 220.5L1212 220.5L1212 218.3L1213 218.3L1213 219.9L1214 219.9L1214 216L1215 216L1215 219L1216 219L1216 220.8L1217 220.8L1217 218.2L1218 218.2L1218 219L1219 219L1219 220.4L1220 220.4L1220 218.6L1221 218.6L1221 223.3L1222 223.3L1222 222.2L1223 222.2L1223 223.5L1224 223.5L1224 225.2L1225 225.2L1225 225.5L1226 225.5L1226 225.5L1227 225.5L1227 224.9L1228 224.9L1228 225.7L1229 225.7L1229 225.7L1230 225.7L1230 227.3L1231 227.3L1231 229.1L1232 229.1L1232 224.2L1233 224.2L1233 228.7L1234 228.7L1234 227.3L1235 227.3L1235 236L1236 236L1236 228.3L1237 228.3L1237 234.3L1238 234.3L1238 233.8L1239 233.8L1239 240.1L1240 240.1L1240 237.3L1241 237.3L1241 240.7L1242 240.7L1242 239.4L1243 239.4L1243 241.5L1244 241.5L1244 239.5L1245 239.5L1245 245.9L1246 245.9L1246 242L1247 242L1247 245.8L1248 245.8L1248 246.8L1249 246.8L1249 245.6L1250 245.6L1250 247.7L1251 247.7L1251 247.6L1252 247.6L1252 247.9L1253 247.9L1253 251.7L1254 251.7L1254 252.6L1255 252.6L1255 252.4L1256 252.4L1256 253.7L1257 253.7L1257 253.7L1258 253.7L1258 255.8L1259 255.8L1259 256.7L1260 256.7L1260 256.9L1261 256.9L1261 257.8L1262 257.8L1262 257.9L1263 257.9L1263 257.8L1264 257.8L1264 257.9L1265 257.9L1265 257.9L1266 257.9L1266 257.8L1267 257.8L1267 257.9L1268 257.9L1268 257.9L1269 257.9L1269 257.8L1270 257.8L1270 257.8L1271 257.8L1271 257.9L1272 257.9L1272 257.9L1273 257.9L1273 257.9L1274 257.9L1274 259.1L1273 259.1L1273 259.1L1272 259.1L1272 259.2L1271 259.2L1271 259.2L1270 259.2L1270 259.1L1269 259.1L1269 259.1L1268 259.1L1268 259.1L1267 259.1L1267 259.2L1266 259.2L1266 259.1L1265 259.1L1265 259.1L1264 259.1L1264 259.2L1263 259.2L1263 259.1L1262 259.1L1262 259.1L1261 259.1L1261 259.7L1260 259.7L1260 260.9L1259 260.9L1259 261.1L1258 261.1L1258 262.4L1257 262.4L1257 263.5L1256 263.5L1256 263.9L1255 263.9L1255 265.9L1254 265.9L1254 265.4L1253 265.4L1253 265.7L1252 265.7L1252 266.9L1251 266.9L1251 269.3L1250 269.3L1250 269.3L1249 269.3L1249 273.3L1248 273.3L1248 273.4L1247 273.4L1247 271L1246 271L1246 274.8L1245 274.8L1245 274.4L1244 274.4L1244 278.6L1243 278.6L1243 274.9L1242 274.9L1242 276.7L1241 276.7L1241 279.3L1240 279.3L1240 277.6L1239 277.6L1239 286.8L1238 286.8L1238 281.6L1237 281.6L1237 282.3L1236 282.3L1236 287.5L1235 287.5L1235 284.9L1234 284.9L1234 285L1233 285L1233 292.8L1232 292.8L1232 291.2L1231 291.2L1231 287.3L1230 287.3L1230 293.7L1229 293.7L1229 291.3L1228 291.3L1228 293.7L1227 293.7L1227 294L1226 294L1226 294.2L1225 294.2L1225 296.1L1224 296.1L1224 295L1223 295L1223 297.4L1222 297.4L1222 294.6L1221 294.6L1221 293L1220 293L1220 294.7L1219 294.7L1219 300L1218 300L1218 296.7L1217 296.7L1217 296.4L1216 296.4L1216 296.3L1215 296.3L1215 297.3L1214 297.3L1214 293.8L1213 293.8L1213 297.5L1212 297.5L1212 297.9L1211 297.9L1211 298.8L1210 298.8L1210 295.8L1209 295.8L1209 296.3L1208 296.3L1208 295.8L1207 295.8L1207 298.4L1206 298.4L1206 300.7L1205 300.7L1205 293.8L1204 293.8L1204 295.5L1203 295.5L1203 298.2L1202 298.2L1202 296.9L1201 296.9L1201 300.5L1200 300.5L1200 301.3L1199 301.3L1199 298.3L1198 298.3L1198 302.6L1197 302.6L1197 296.3L1196 296.3L1196 295.8L1195 295.8L1195 298.1L1194 298.1L1194 303.2L1193 303.2L1193 297.5L1192 297.5L1192 299.7L1191 299.7L1191 298.5L1190 298.5L1190 302.3L1189 302.3L1189 296.3L1188 296.3L1188 298.7L1187 298.7Z"/>
<path fill="#4a8b4f" d="M1187 366.8L1188 366.8L1188 379.7L1189 379.7L1189 378.8L1190 378.8L1190 375.8L1191 375.8L1191 379.1L1192 379.1L1192 372.4L1193 372.4L1193 381.4L1194 381.4L1194 382L1195 382L1195 382.4L1196 382.4L1196 379.1L1197 379.1L1197 383.5L1198 383.5L1198 375.2L1199 375.2L1199 383.2L1200 383.2L1200 381.7L1201 381.7L1201 377.2L1202 377.2L1202 383.1L1203 383.1L1203 376.2L1204 376.2L1204 386.1L1205 386.1L1205 377.5L1206 377.5L1206 378.7L1207 378.7L1207 380.6L1208 380.6L1208 375.8L1209 375.8L1209 387.9L1210 387.9L1210 384L1211 384L1211 386.2L1212 386.2L1212 388.4L1213 388.4L1213 384.6L1214 384.6L1214 384.8L1215 384.8L1215 386.8L1216 386.8L1216 384.2L1217 384.2L1217 389.6L1218 389.6L1218 383L1219 383L1219 391.2L1220 391.2L1220 390.8L1221 390.8L1221 387.5L1222 387.5L1222 387.8L1223 387.8L1223 392.6L1224 392.6L1224 385.4L1225 385.4L1225 393.4L1226 393.4L1226 383.1L1227 383.1L1227 390.9L1228 390.9L1228 386.9L1229 386.9L1229 385.7L1230 385.7L1230 399.6L1231 399.6L1231 393L1232 393L1232 397.6L1233 397.6L1233 403.7L1234 403.7L1234 401.8L1235 401.8L1235 402L1236 402L1236 399.1L1237 399.1L1237 406.2L1238 406.2L1238 416.5L1239 416.5L1239 418.1L1240 418.1L1240 420.9L1241 420.9L1241 416.7L1242 416.7L1242 425.3L1243 425.3L1243 424.6L1244 424.6L1244 420.2L1245 420.2L1245 422.4L1246 422.4L1246 431.4L1247 431.4L1247 433.6L1248 433.6L1248 437.4L1249 437.4L1249 430.1L1250 430.1L1250 441.2L1251 441.2L1251 438.3L1252 438.3L1252 445.2L1253 445.2L1253 442.8L1254 442.8L1254 449.1L1255 449.1L1255 450.8L1256 450.8L1256 452.5L1257 452.5L1257 450.8L1258 450.8L1258 454.8L1259 454.8L1259 455.3L1260 455.3L1260 458.6L1261 458.6L1261 459.7L1262 459.7L1262 461.4L1263 461.4L1263 464.1L1264 464.1L1264 466.4L1265 466.4L1265 468.5L1266 468.5L1266 469.7L1267 469.7L1267 471.4L1268 471.4L1268 472.3L1269 472.3L1269 472.4L1270 472.4L1270 472.4L1271 472.4L1271 472.3L1272 472.3L1272 472.4L1273 472.4L1273 472.4L1274 472.4L1274 473.6L1273 473.6L1273 473.7L1272 473.7L1272 473.8L1271 473.8L1271 473.6L1270 473.6L1270 473.6L1269 473.6L1269 473.6L1268 473.6L1268 474.6L1267 474.6L1267 476.2L1266 476.2L1266 477.6L1265 477.6L1265 479.2L1264 479.2L1264 481.1L1263 481.1L1263 482.5L1262 482.5L1262 485.7L1261 485.7L1261 488.1L1260 488.1L1260 489.7L1259 489.7L1259 494.1L1258 494.1L1258 494.9L1257 494.9L1257 494.4L1256 494.4L1256 496.7L1255 496.7L1255 496.9L1254 496.9L1254 498.8L1253 498.8L1253 503.1L1252 503.1L1252 505.7L1251 505.7L1251 504.6L1250 504.6L1250 515.6L1249 515.6L1249 510.4L1248 510.4L1248 514.8L1247 514.8L1247 521.6L1246 521.6L1246 514.6L1245 514.6L1245 528.3L1244 528.3L1244 525.8L1243 525.8L1243 531.6L1242 531.6L1242 524L1241 524L1241 524.9L1240 524.9L1240 540.3L1239 540.3L1239 538.7L1238 538.7L1238 535.1L1237 535.1L1237 546.4L1236 546.4L1236 541.8L1235 541.8L1235 537.8L1234 537.8L1234 543.3L1233 543.3L1233 550.5L1232 550.5L1232 548.7L1231 548.7L1231 545.8L1230 545.8L1230 556.6L1229 556.6L1229 557.4L1228 557.4L1228 565L1227 565L1227 562.6L1226 562.6L1226 552.9L1225 552.9L1225 552.7L1224 552.7L1224 555.2L1223 555.2L1223 555.3L1222 555.3L1222 562.7L1221 562.7L1221 558.7L1220 558.7L1220 562.6L1219 562.6L1219 567.2L1218 567.2L1218 559L1217 559L1217 564.6L1216 564.6L1216 555.8L1215 555.8L1215 558.1L1214 558.1L1214 559.1L1213 559.1L1213 563.5L1212 563.5L1212 561.4L1211 561.4L1211 561.5L1210 561.5L1210 561.2L1209 561.2L1209 566.5L1208 566.5L1208 564L1207 564L1207 571.6L1206 571.6L1206 565.3L1205 565.3L1205 563.6L1204 563.6L1204 568.1L1203 568.1L1203 561.1L1202 561.1L1202 568.4L1201 568.4L1201 566.3L1200 566.3L1200 564.6L1199 564.6L1199 572.5L1198 572.5L1198 564.9L1197 564.9L1197 568.1L1196 568.1L1196 568L1195 568L1195 571.1L1194 571.1L1194 566.8L1193 566.8L1193 566.1L1192 566.1L1192 575.4L1191 575.4L1191 570.8L1190 570.8L1190 574.6L1189 574.6L1189 567.5L1188 567.5L1188 567.3L1187 567.3Z"/>
<path fill="#53a558" d="M1187 369.4L1188 369.4L1188 383.9L1189 383.9L1189 384.9L1190 384.9L1190 380.8L1191 380.8L1191 383.4L1192 383.4L1192 377.3L1193 377.3L1193 389.4L1194 389.4L1194 386L1195 386L1195 386.2L1196 386.2L1196 387.4L1197 387.4L1197 384.5L1198 384.5L1198 375.3L1199 375.3L1199 391.6L1200 391.6L1200 383.4L1201 383.4L1201 383.8L1202 383.8L1202 383.2L1203 383.2L1203 381.2L1204 381.2L1204 387.1L1205 387.1L1205 385L1206 385L1206 380L1207 380L1207 381.6L1208 381.6L1208 383.6L1209 383.6L1209 395L1210 395L1210 387.3L1211 387.3L1211 391.1L1212 391.1L1212 393.2L1213 393.2L1213 393L1214 393L1214 389.9L1215 389.9L1215 389.6L1216 389.6L1216 384.6L1217 384.6L1217 397.2L1218 397.2L1218 387.2L1219 387.2L1219 393.4L1220 393.4L1220 394.1L1221 394.1L1221 389.7L1222 389.7L1222 391.3L1223 391.3L1223 398.3L1224 398.3L1224 387.3L1225 387.3L1225 398.1L1226 398.1L1226 388L1227 388L1227 391.8L1228 391.8L1228 387.7L1229 387.7L1229 387.1L1230 387.1L1230 405.5L1231 405.5L1231 393.6L1232 393.6L1232 400.5L1233 400.5L1233 409.5L1234 409.5L1234 407.6L1235 407.6L1235 407L1236 407L1236 401.3L1237 401.3L1237 408.6L1238 408.6L1238 420.8L1239 420.8L1239 423.5L1240 423.5L1240 425.1L1241 425.1L1241 424.4L1242 424.4L1242 431.1L1243 431.1L1243 432L1244 432L1244 427.7L1245 427.7L1245 427.8L1246 427.8L1246 433.9L1247 433.9L1247 437.9L1248 437.9L1248 440.1L1249 440.1L1249 430.8L1250 430.8L1250 441.8L1251 441.8L1251 441.4L1252 441.4L1252 449.7L1253 449.7L1253 445.3L1254 445.3L1254 450.9L1255 450.9L1255 452L1256 452L1256 456L1257 456L1257 452.3L1258 452.3L1258 455L1259 455L1259 457.9L1260 457.9L1260 458.7L1261 458.7L1261 460.4L1262 460.4L1262 461.8L1263 461.8L1263 465.4L1264 465.4L1264 466.5L1265 466.5L1265 468.5L1266 468.5L1266 469.8L1267 469.8L1267 471.6L1268 471.6L1268 472.4L1269 472.4L1269 472.4L1270 472.4L1270 472.4L1271 472.4L1271 472.3L1272 472.3L1272 472.4L1273 472.4L1273 472.4L1274 472.4L1274 473.6L1273 473.6L1273 473.7L1272 473.7L1272 473.7L1271 473.7L1271 473.6L1270 473.6L1270 473.6L1269 473.6L1269 473.6L1268 473.6L1268 474.4L1267 474.4L1267 476.1L1266 476.1L1266 477.4L1265 477.4L1265 479.2L1264 479.2L1264 479.8L1263 479.8L1263 481.1L1262 481.1L1262 484.1L1261 484.1L1261 486.9L1260 486.9L1260 489.6L1259 489.6L1259 491.9L1258 491.9L1258 492.7L1257 492.7L1257 493.9L1256 493.9L1256 495.2L1255 495.2L1255 492.7L1254 492.7L1254 498L1253 498L1253 503L1252 503L1252 502.3L1251 502.3L1251 499.5L1250 499.5L1250 511.3L1249 511.3L1249 506.3L1248 506.3L1248 514L1247 514L1247 515.6L1246 515.6L1246 508.3L1245 508.3L1245 523.5L1244 523.5L1244 522.5L1243 522.5L1243 529.8L1242 529.8L1242 518.6L1241 518.6L1241 523.8L1240 523.8L1240 535.7L1239 535.7L1239 530.3L1238 530.3L1238 532.2L1237 532.2L1237 540.9L1236 540.9L1236 539.7L1235 539.7L1235 531.3L1234 531.3L1234 537.6L1233 537.6L1233 544.1L1232 544.1L1232 548.3L1231 548.3L1231 540L1230 540L1230 549.1L1229 549.1L1229 550.6L1228 550.6L1228 561L1227 561L1227 558.8L1226 558.8L1226 549L1225 549L1225 544.9L1224 544.9L1224 550.3L1223 550.3L1223 555.1L1222 555.1L1222 558.4L1221 558.4L1221 551.3L1220 551.3L1220 557.9L1219 557.9L1219 562L1218 562L1218 551.2L1217 551.2L1217 561.9L1216 561.9L1216 552L1215 552L1215 555.5L1214 555.5L1214 556.6L1213 556.6L1213 559.4L1212 559.4L1212 560.1L1211 560.1L1211 558.4L1210 558.4L1210 555.1L1209 555.1L1209 559.9L1208 559.9L1208 559.8L1207 559.8L1207 565.4L1206 565.4L1206 558.1L1205 558.1L1205 561.2L1204 561.2L1204 564.6L1203 564.6L1203 555.5L1202 555.5L1202 562.6L1201 562.6L1201 563.4L1200 563.4L1200 563.9L1199 563.9L1199 570.9L1198 570.9L1198 564.7L1197 564.7L1197 567.2L1196 567.2L1196 563.2L1195 563.2L1195 566L1194 566L1194 564L1193 564L1193 562.3L1192 562.3L1192 568.9L1191 568.9L1191 563L1190 563L1190 566.9L1189 566.9L1189 564.2L1188 564.2L1188 564.3L1187 564.3Z"/>
<rect x="7" y="325" width="1267" height="2" fill="#cbdbe0" opacity="0.55"/>
<rect x="7" y="327" width="1267" height="1.100" fill="#808080" opacity="0.92"/>
<rect x="7" y="399.1" width="1267" height="1.900" fill="#8a8a8a" opacity="0.62"/>
<rect x="7" y="435.1" width="1267" height="1.900" fill="#8a8a8a" opacity="0.62"/>
<rect x="7" y="454.1" width="1267" height="1.900" fill="#8a8a8a" opacity="0.62"/>
<rect x="7" y="490.1" width="1267" height="1.900" fill="#8a8a8a" opacity="0.62"/>
<rect x="7" y="509.1" width="1267" height="1.900" fill="#8a8a8a" opacity="0.62"/>
<rect x="7" y="545" width="1267" height="1.900" fill="#8a8a8a" opacity="0.62"/>
<rect x="7" y="257" width="1267" height="2" fill="#bfdc2e"/>
<rect x="323" y="257" width="526" height="2" fill="#e2e86c"/>
<rect x="7" y="472" width="1267" height="2" fill="#bfdc2e"/>
<rect x="323" y="472" width="526" height="2" fill="#e2e86c"/>
<path d="M7.5 326V190.5H1273" fill="none" stroke="#93a5ad" stroke-width="1"/>
<rect x="1272" y="190" width="2.2" height="137" fill="#7e929c"/>
<g font-family="Liberation Sans, sans-serif" font-size="16.5" fill="#8f8f8f">
<clipPath id="cl"><rect x="0" y="328" width="200" height="290.700"/></clipPath><g clip-path="url(#cl)">
<text transform="translate(8.900 341.9) scale(0.885 1)">0dB</text>
<text transform="translate(8.900 414.7) scale(0.885 1)">-6dB</text>
<text transform="translate(8.900 451.2) scale(0.885 1)">-12dB</text>
<text transform="translate(8.900 469.9) scale(0.885 1)">-18dB</text>
<text transform="translate(8.900 493.4) scale(0.885 1)">-18dB</text>
<text transform="translate(8.900 512.3) scale(0.885 1)">-12dB</text>
<text transform="translate(8.900 548.4) scale(0.885 1)">-6dB</text>
<text transform="translate(8.900 621.4) scale(0.885 1)">0dB</text>
</g></g>
<rect x="848" y="190" width="2" height="137" fill="#c6503a"/>
<rect x="848" y="327" width="2" height="292" fill="#d22626"/>
<linearGradient id="gh" x1="0" y1="0" x2="0" y2="1"><stop offset="0" stop-color="#ffffff"/><stop offset="0.5" stop-color="#f4f0f0"/><stop offset="1" stop-color="#cfc4c4"/></linearGradient>
<path d="M844.4 190.2 h14.400 v4.800 l-5.600 5.600 q-1.600 1.400 -3.200 0 l-5.600 -5.600z" fill="url(#gh)" stroke="#7d7878" stroke-width="1" stroke-linejoin="round"/>
<path d="M850.300 201.2 l1.200 -2 l1.200 2z" fill="#e01010"/>
<path d="M844.4 327.3 h14.400 v4.800 l-5.600 5.600 q-1.600 1.400 -3.200 0 l-5.600 -5.600z" fill="url(#gh)" stroke="#7d7878" stroke-width="1" stroke-linejoin="round"/>
<path d="M850.300 338.3 l1.200 -2 l1.200 2z" fill="#e01010"/>
<path d="M7 214.800 h8.500 l3.300 3.300 v12.300 l-3.300 3.300 h-8.500z" fill="#fff" stroke="#000" stroke-width="1.100"/>
<path d="M7 223.900 h5" fill="none" stroke="#222" stroke-width="1.300"/><path d="M11 220.400 l4.200 3.500 l-4.200 3.500z" fill="#000"/>
<path d="M1274.300 214.800 h-7.500 l-3.300 3.300 v12.300 l3.300 3.300 h7.500z" fill="#fff" stroke="#000" stroke-width="1.100"/>
<path d="M1274.300 223.900 h-4" fill="none" stroke="#222" stroke-width="1.300"/><path d="M1271.300 220.400 l-4.200 3.500 l4.200 3.500z" fill="#000"/>
<rect x="7" y="618.700" width="1267" height="1.300" fill="#fff"/>
</svg>
<div id="timeline">
 <div class="tl" style="left:145.350px">30s</div>
 <div class="tl" style="left:289.500px">1m</div>
 <div class="tl" style="left:434.200px">1m:30s</div>
 <div class="tl" style="left:579.500px">2m</div>
 <div class="tl" style="left:722.700px">2m:30s</div>
 <div class="tl" style="left:868.400px">3m</div>
 <div class="tl" style="left:1011.800px">3m:30s</div>
 <div class="tl" style="left:1157px">4m</div>
 <div class="abs" style="left:72px;top:41px;width:1px;height:2px;background:#dcdcdc"></div><div class="abs" style="left:96px;top:41px;width:1px;height:2px;background:#dcdcdc"></div><div class="abs" style="left:120px;top:41px;width:1px;height:2px;background:#dcdcdc"></div><div class="abs" style="left:144px;top:37px;width:2px;height:6px;background:#c6c6c6"></div><div class="abs" style="left:169px;top:41px;width:1px;height:2px;background:#dcdcdc"></div><div class="abs" style="left:193px;top:41px;width:1px;height:2px;background:#dcdcdc"></div><div class="abs" style="left:217px;top:41px;width:1px;height:2px;background:#dcdcdc"></div><div class="abs" style="left:241px;top:41px;width:1px;height:2px;background:#dcdcdc"></div><div class="abs" style="left:265px;top:41px;width:1px;height:2px;background:#dcdcdc"></div><div class="abs" style="left:289px;top:37px;width:2px;height:6px;background:#c6c6c6"></div><div class="abs" style="left:313px;top:41px;width:1px;height:2px;background:#dcdcdc"></div><div class="abs" style="left:337px;top:41px;width:1px;height:2px;background:#dcdcdc"></div><div class="abs" style="left:361px;top:41px;width:1px;height:2px;background:#dcdcdc"></div><div class="abs" style="left:385px;top:41px;width:1px;height:2px;background:#dcdcdc"></div><div class="abs" style="left:409px;top:41px;width:1px;height:2px;background:#dcdcdc"></div><div class="abs" style="left:433px;top:37px;width:2px;height:6px;background:#c6c6c6"></div><div class="abs" style="left:458px;top:41px;width:1px;height:2px;background:#dcdcdc"></div><div class="abs" style="left:482px;top:41px;width:1px;height:2px;background:#dcdcdc"></div><div class="abs" style="left:506px;top:41px;width:1px;height:2px;background:#dcdcdc"></div><div class="abs" style="left:530px;top:41px;width:1px;height:2px;background:#dcdcdc"></div><div class="abs" style="left:554px;top:41px;width:1px;height:2px;background:#dcdcdc"></div><div class="abs" style="left:578px;top:37px;width:2px;height:6px;background:#c6c6c6"></div><div class="abs" style="left:602px;top:41px;width:1px;height:2px;background:#dcdcdc"></div><div class="abs" style="left:626px;top:41px;width:1px;height:2px;background:#dcdcdc"></div><div class="abs" style="left:650px;top:41px;width:1px;height:2px;background:#dcdcdc"></div><div class="abs" style="left:674px;top:41px;width:1px;height:2px;background:#dcdcdc"></div><div class="abs" style="left:699px;top:41px;width:1px;height:2px;background:#dcdcdc"></div><div class="abs" style="left:722px;top:37px;width:2px;height:6px;background:#c6c6c6"></div><div class="abs" style="left:747px;top:41px;width:1px;height:2px;background:#dcdcdc"></div><div class="abs" style="left:771px;top:41px;width:1px;height:2px;background:#dcdcdc"></div><div class="abs" style="left:795px;top:41px;width:1px;height:2px;background:#dcdcdc"></div><div class="abs" style="left:819px;top:41px;width:1px;height:2px;background:#dcdcdc"></div><div class="abs" style="left:843px;top:41px;width:1px;height:2px;background:#dcdcdc"></div><div class="abs" style="left:867px;top:37px;width:2px;height:6px;background:#c6c6c6"></div><div class="abs" style="left:891px;top:41px;width:1px;height:2px;background:#dcdcdc"></div><div class="abs" style="left:915px;top:41px;width:1px;height:2px;background:#dcdcdc"></div><div class="abs" style="left:939px;top:41px;width:1px;height:2px;background:#dcdcdc"></div><div class="abs" style="left:964px;top:41px;width:1px;height:2px;background:#dcdcdc"></div><div class="abs" style="left:988px;top:41px;width:1px;height:2px;background:#dcdcdc"></div><div class="abs" style="left:1011px;top:37px;width:2px;height:6px;background:#c6c6c6"></div><div class="abs" style="left:1036px;top:41px;width:1px;height:2px;background:#dcdcdc"></div><div class="abs" style="left:1060px;top:41px;width:1px;height:2px;background:#dcdcdc"></div><div class="abs" style="left:1084px;top:41px;width:1px;height:2px;background:#dcdcdc"></div><div class="abs" style="left:1108px;top:41px;width:1px;height:2px;background:#dcdcdc"></div><div class="abs" style="left:1132px;top:41px;width:1px;height:2px;background:#dcdcdc"></div><div class="abs" style="left:1156px;top:37px;width:2px;height:6px;background:#c6c6c6"></div><div class="abs" style="left:1180px;top:41px;width:1px;height:2px;background:#dcdcdc"></div><div class="abs" style="left:1204px;top:41px;width:1px;height:2px;background:#dcdcdc"></div><div class="abs" style="left:1229px;top:41px;width:1px;height:2px;background:#dcdcdc"></div><div class="abs" style="left:1253px;top:41px;width:1px;height:2px;background:#dcdcdc"></div>
 <svg class="abs" style="left:830px;top:0" width="40" height="43" viewBox="837 618 40 43"><rect x="848.200" y="618" width="1.700" height="24" fill="#ff5252"/><path d="M849 640.500L855 645.300V661H843.100V645.300Z" fill="#ff3e3e"/></svg>
</div>
<svg class="abs" style="left:0;top:636px" width="1280" height="100" viewBox="0 636 1280 100">
 <defs>
  <linearGradient id="gbar" gradientUnits="userSpaceOnUse" x1="0" y1="646" x2="0" y2="736"><stop offset="0" stop-color="#6a6a6a"/><stop offset="0.18" stop-color="#5c5c5c"/><stop offset="0.5" stop-color="#3a3a3a"/><stop offset="0.8" stop-color="#232323"/><stop offset="1" stop-color="#141414"/></linearGradient>
  <linearGradient id="gblue" gradientUnits="userSpaceOnUse" x1="0" y1="661" x2="0" y2="718"><stop offset="0" stop-color="#3d6eea"/><stop offset="0.35" stop-color="#2a58da"/><stop offset="0.7" stop-color="#1f42bc"/><stop offset="1" stop-color="#182f9c"/></linearGradient>
  <linearGradient id="ggloss" gradientUnits="userSpaceOnUse" x1="0" y1="661" x2="0" y2="694"><stop offset="0" stop-color="#b4c6fa" stop-opacity="0.8"/><stop offset="1" stop-color="#7a98ee" stop-opacity="0.5"/></linearGradient>
  <linearGradient id="gglossx" gradientUnits="userSpaceOnUse" x1="300" y1="0" x2="800" y2="0"><stop offset="0" stop-color="#fff" stop-opacity="1"/><stop offset="0.4" stop-color="#fff" stop-opacity="0.7"/><stop offset="1" stop-color="#fff" stop-opacity="0"/></linearGradient>
  <mask id="mgloss"><rect x="290" y="655" width="600" height="50" fill="url(#gglossx)"/></mask>
  <linearGradient id="gedge" gradientUnits="userSpaceOnUse" x1="0" y1="660" x2="0" y2="722"><stop offset="0" stop-color="#c4c4c4"/><stop offset="0.5" stop-color="#8a8a8a"/><stop offset="1" stop-color="#e0e0e0"/></linearGradient>
  <radialGradient id="gred" cx="0.5" cy="0.42" r="0.58"><stop offset="0" stop-color="#de4856"/><stop offset="0.7" stop-color="#d63d4c"/><stop offset="0.9" stop-color="#c02e3e"/><stop offset="1" stop-color="#7c1824"/></radialGradient>
  <radialGradient id="gglow" gradientUnits="userSpaceOnUse" cx="33" cy="697" r="58"><stop offset="0.84" stop-color="#cfcfcf" stop-opacity="1"/><stop offset="0.92" stop-color="#e4e4e4" stop-opacity="0.7"/><stop offset="1" stop-color="#fff" stop-opacity="0"/></radialGradient>
  <filter id="blur2" x="-20%" y="-20%" width="140%" height="140%"><feGaussianBlur stdDeviation="1.6"/></filter>
  <filter id="blur1" x="-20%" y="-20%" width="140%" height="140%"><feGaussianBlur stdDeviation="0.6"/></filter>
  <clipPath id="cpT"><rect x="0" y="636" width="1280" height="100"/></clipPath>
 </defs>
 <!-- blue progress bar -->
 <rect x="292" y="661" width="988" height="58" fill="url(#gblue)"/>
 <path d="M292 661H900C700 663.500 430 670 318 694Z" fill="url(#ggloss)" mask="url(#mgloss)"/>
 <rect x="292" y="661" width="988" height="1" fill="#6f92f2" opacity="0.7"/>
 <!-- housing -->
 <circle cx="33" cy="697" r="58" fill="url(#gglow)"/>
 <g clip-path="url(#cpT)">
 <path d="M-5 660.700H297C307 660.700 310 680 317 697C323 712 327 719.700 338 719.700H1290V745H-5Z" fill="url(#gbar)" stroke="url(#gedge)" stroke-width="1.600"/>
 <circle cx="33" cy="697" r="50.500" fill="url(#gbar)"/>
 <path d="M-18 697A51 51 0 0 1 71 663" fill="none" stroke="#9a9a9a" stroke-width="1.600" opacity="0.800"/>
 </g>
 <rect x="336" y="718" width="944" height="2.600" fill="#d6d6d6"/>
 <path d="M300 664C309 670 311 684 318 699C324 712 328 716.500 338 717.500" fill="none" stroke="#0c1c60" stroke-width="3" opacity="0.350" filter="url(#blur1)"/>
 <!-- dividers -->
 <path d="M134.500 664V736M196.500 664V736M258.500 664V736" stroke="#161616" stroke-width="1"/>
 <path d="M135.500 664V736M197.500 664V736M259.500 664V736" stroke="#5a5a5a" stroke-width="1" opacity="0.450"/>
 <path d="M72.500 664V736" stroke="#2c2c2c" stroke-width="1" opacity="0.600"/>
 <!-- record -->
 <circle cx="33.500" cy="695" r="30.500" fill="#151515" opacity="0.550" filter="url(#blur2)"/>
 <circle cx="33.500" cy="694.200" r="27.600" fill="url(#gred)"/>
 <path d="M6.300 692A27.400 27.400 0 0 1 44 669.200A40 40 0 0 0 7.200 699Z" fill="#fff" opacity="0.280"/>
 <path d="M7.500 686A27.500 27.500 0 0 1 46 670" fill="none" stroke="#d8d8d8" stroke-width="1.200" opacity="0.800"/>
 <circle cx="33.500" cy="694.500" r="11.500" fill="#f4c2ca"/>
 <path d="M22 694.500A11.500 11.500 0 0 1 45 694.500Z" fill="#ffffff"/>
 <g filter="url(#blur1)" fill="#fff">
 <!-- play -->
 <path d="M92 682L117.500 696.800L92 711.500Z"/>
 <!-- pause -->
 <rect x="153" y="684" width="8.400" height="24"/><rect x="169" y="684" width="8.400" height="24"/>
 <!-- prev -->
 <rect x="214.500" y="685.500" width="4.400" height="22.500"/><path d="M240.500 685.500L220 696.500L240.500 708Z"/>
 <!-- next -->
 <rect x="297.500" y="685.500" width="4.400" height="22.500"/><path d="M276.500 685.500L297 696.500L276.500 708Z"/>
 </g>
 <text x="1257.500" y="695.900" text-anchor="end" font-family="Liberation Sans, sans-serif" font-size="17.200" fill="#f6f6f6">0:02:54.55</text>
</svg>
<div id="nav">
<svg class="abs" style="left:0;top:0" width="1280" height="64" viewBox="0 0 1280 64">
 <path d="M434.100 20.900V43.400L414.500 32.150Z" fill="none" stroke="#ececec" stroke-width="2.500" stroke-linejoin="round"/>
 <circle cx="640.100" cy="32.100" r="10.250" fill="none" stroke="#ececec" stroke-width="2.500"/>
 <rect x="846.900" y="23" width="19" height="18.800" rx="1" fill="none" stroke="#ececec" stroke-width="2.500"/>
</svg>
</div>
</div>
</body>
</html>
